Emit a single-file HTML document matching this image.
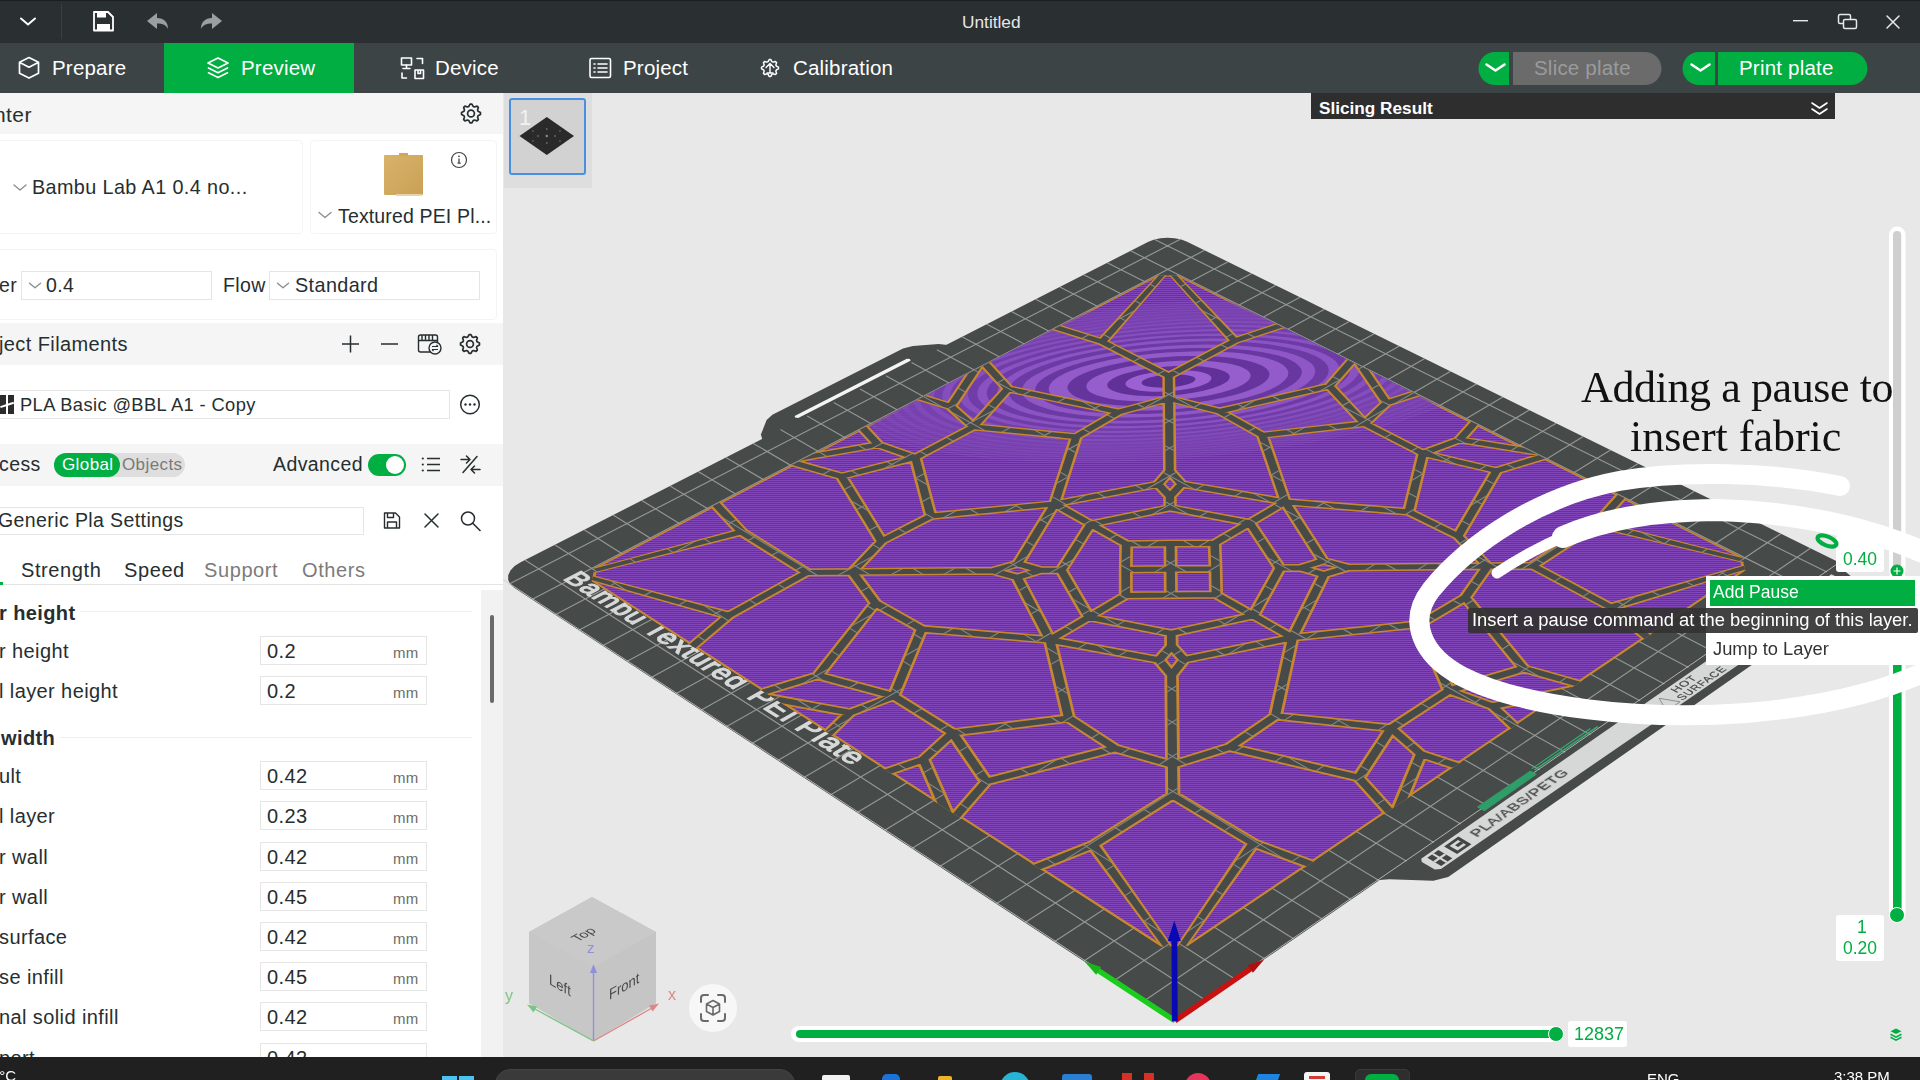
<!DOCTYPE html><html><head><meta charset="utf-8"><title>Untitled</title><style>
*{box-sizing:border-box;margin:0;padding:0}
html,body{width:1920px;height:1080px;overflow:hidden;background:#e8e8e8;font-family:"Liberation Sans",sans-serif;color:#262e30}
.abs{position:absolute}
#title{left:0;top:0;width:1920px;height:43px;background:#2a2f31;border-top:1px solid #1b1e1f}
#tabs{left:0;top:43px;width:1920px;height:50px;background:#3c4446}
.tab{position:absolute;top:0;height:50px;color:#fff;font-size:20.5px;line-height:50px;white-space:nowrap;letter-spacing:0.2px}
#left{left:0;top:93px;width:503px;height:965px;background:#fff;overflow:hidden}
.hdr{position:absolute;left:0;width:503px;background:#f5f5f5}
.t{position:absolute;white-space:nowrap;line-height:1}
#left .t{letter-spacing:0.4px}
.box{position:absolute;border:1px solid #e5e5e5;background:#fff}
.card{position:absolute;border:1px solid #f4f4f4;border-radius:4px;background:#fff}
.mm{position:absolute;font-size:15px;color:#6b6b6b;line-height:1;letter-spacing:0.3px}
#view{left:503px;top:93px;width:1417px;height:965px;background:#e8e8e8;overflow:hidden}
#taskbar{left:0;top:1057px;width:1920px;height:23px;background:#202020;overflow:hidden}
svg{position:absolute;overflow:visible}
</style></head><body><div id="title" class="abs"><svg width="1920" height="43" style="left:0;top:-1px"><path d="M21 18.5 L28 24.5 L35 18.5" fill="none" stroke="#fff" stroke-width="2" stroke-linecap="round" stroke-linejoin="round"/><rect x="61" y="4" width="1" height="35" fill="#3a4042"/><path d="M94 12 h14 l5 5 v13.5 h-19 z" fill="none" stroke="#fff" stroke-width="1.8" stroke-linejoin="round"/><rect x="97" y="12.5" width="9" height="5" fill="#fff"/><rect x="97" y="24" width="13" height="6" fill="#fff"/><path d="M147 21 l10 -8 v5 c7 0 11 4 11 11 c-2 -4 -5 -5.5 -11 -5.5 v5.5 z" fill="#9a9fa0"/><path d="M222 21 l-10 -8 v5 c-7 0 -11 4 -11 11 c2 -4 5 -5.5 11 -5.5 v5.5 z" fill="#9a9fa0"/><rect x="1793" y="20" width="15" height="1.4" fill="#e8e8e8"/><rect x="1838.5" y="14.5" width="12" height="9" rx="1.5" fill="none" stroke="#e8e8e8" stroke-width="1.5"/><rect x="1843.5" y="19.5" width="13" height="9" rx="1.5" fill="#2a2f31" stroke="#e8e8e8" stroke-width="1.5"/><path d="M1887 16 l12 12 M1899 16 l-12 12" stroke="#e8e8e8" stroke-width="1.5" stroke-linecap="round"/></svg><div class="t" style="left:962px;top:13px;font-size:17.300px;color:#e6e6e6">Untitled</div></div><div id="tabs" class="abs"><div class="abs" style="left:164px;top:0;width:190px;height:50px;background:#00ae42"></div><svg width="1920" height="50" style="left:0;top:0"><path d="M29 14.5 l9.5 4.8 v11 l-9.5 4.8 l-9.5 -4.8 v-11 z M19.8 19.5 l9.2 4.7 l9.2 -4.7" fill="none" stroke="#fff" stroke-width="1.7" stroke-linejoin="round"/><path d="M218 15 l10 5 l-10 5 l-10 -5 z M208.5 25 l9.5 4.8 l9.5 -4.8 M208.5 29.8 l9.5 4.8 l9.5 -4.8" fill="none" stroke="#fff" stroke-width="1.7" stroke-linejoin="round" stroke-linecap="round"/><g fill="none" stroke="#fff" stroke-width="1.6" stroke-linejoin="round" stroke-linecap="round"><rect x="401.5" y="15" width="10" height="7"/><path d="M406.5 22 v3 M403 25.5 h7"/><path d="M417 15.5 h5.5 v5"/><path d="M402 30 v5 h4.5"/><rect x="415" y="27" width="8.5" height="8.5"/><path d="M418 27.5 v3 h2.5 v-3"/></g><g fill="none" stroke="#fff" stroke-width="1.6" stroke-linejoin="round" stroke-linecap="round"><rect x="590" y="15.5" width="20.5" height="19" rx="1.5"/><path d="M594 21 h1 M598 21 h9 M594 25 h1 M598 25 h9 M594 29 h1 M598 29 h9"/></g><path d="M769.17 16.54 L770.83 16.54 L771.92 18.66 L773.13 19.15 L775.39 18.43 L776.57 19.61 L775.85 21.87 L776.34 23.08 L778.46 24.17 L778.46 25.83 L776.34 26.92 L775.85 28.13 L776.57 30.39 L775.39 31.57 L773.13 30.85 L771.92 31.34 L770.83 33.46 L769.17 33.46 L768.08 31.34 L766.87 30.85 L764.61 31.57 L763.43 30.39 L764.15 28.13 L763.66 26.92 L761.54 25.83 L761.54 24.17 L763.66 23.08 L764.15 21.87 L763.43 19.61 L764.61 18.43 L766.87 19.15 L768.08 18.66Z" fill="none" stroke="#fff" stroke-width="1.5" stroke-linejoin="round"/><circle style="display:none" cx="770" cy="25" r="3.06" fill="none" stroke="#fff" stroke-width="1.5"/><path d="M770 20.5 v9 M766 24.5 l4 -4 l4 4 M767 30 h6" fill="none" stroke="#fff" stroke-width="1.4" stroke-linecap="round" stroke-linejoin="round"/><path d="M1495 9 h14 v33 h-14 a16.5 16.5 0 0 1 0 -33z" fill="#00ae42"/><path d="M1513 9 h132 a16.5 16.5 0 0 1 0 33 h-132z" fill="#6b6b6b"/><path d="M1486.5 21.5 l9 6 l9 -6" fill="none" stroke="#fff" stroke-width="2.6" stroke-linecap="round" stroke-linejoin="round"/><path d="M1699 9 h16 v33 h-16 a16.5 16.5 0 0 1 0 -33z" fill="#00ae42"/><path d="M1718 9 h133 a16.5 16.5 0 0 1 0 33 h-133z" fill="#00ae42"/><path d="M1691.5 21.5 l9 6 l9 -6" fill="none" stroke="#fff" stroke-width="2.6" stroke-linecap="round" stroke-linejoin="round"/></svg><div class="tab" style="left:52px">Prepare</div><div class="tab" style="left:241px">Preview</div><div class="tab" style="left:435px">Device</div><div class="tab" style="left:623px">Project</div><div class="tab" style="left:793px">Calibration</div><div class="tab" style="left:1534px;color:#9b9b9b">Slice plate</div><div class="tab" style="left:1739px">Print plate</div></div><div id="left" class="abs"><div class="hdr" style="top:0;height:41px"></div><div class="t" style="left:-6px;top:11px;font-size:21px">nter</div><div class="card" style="left:-10px;top:47px;width:313px;height:94px"></div><div class="card" style="left:310px;top:47px;width:187px;height:94px"></div><div class="t" style="left:32px;top:85px;font-size:19.8px">Bambu Lab A1 0.4 no...</div><div class="abs" style="left:384px;top:62px;width:39px;height:40px;background:linear-gradient(135deg,#d9b36a,#c9a055);border-radius:1px"></div><div class="abs" style="left:399px;top:60px;width:9px;height:3px;background:#cfa75e"></div><div class="abs" style="left:396px;top:101px;width:26px;height:2px;background:#e6d3a8"></div><div class="t" style="left:338px;top:113.5px;font-size:19.5px;letter-spacing:0.15px">Textured PEI Pl...</div><div class="card" style="left:-10px;top:156px;width:507px;height:71px"></div><div class="t" style="left:-1px;top:183px;font-size:19.5px">er</div><div class="box" style="left:21px;top:178px;width:191px;height:29px"></div><div class="t" style="left:46px;top:183px;font-size:19.5px">0.4</div><div class="t" style="left:223px;top:183px;font-size:19.5px">Flow</div><div class="box" style="left:269px;top:178px;width:211px;height:29px"></div><div class="t" style="left:295px;top:183px;font-size:19.8px">Standard</div><div class="hdr" style="top:230px;height:42px"></div><div class="t" style="left:-1px;top:241px;font-size:20px">ject Filaments</div><div class="box" style="left:-10px;top:297px;width:460px;height:29px"></div><div class="abs" style="left:0;top:302px;width:14px;height:19px;background:#2b2b2b"></div><div class="abs" style="left:6px;top:302px;width:1.5px;height:19px;background:#fff"></div><div class="abs" style="left:0;top:311px;width:14px;height:1.5px;background:#fff;transform:rotate(-18deg)"></div><div class="t" style="left:20px;top:303px;font-size:18.3px">PLA Basic @BBL A1 - Copy</div><div class="hdr" style="top:351px;height:42px"></div><div class="t" style="left:-1px;top:362px;font-size:19.5px">cess</div><div class="abs" style="left:54px;top:360px;width:131px;height:24px;border-radius:12px;background:#dedede"></div><div class="abs" style="left:54px;top:360px;width:66px;height:24px;border-radius:12px;background:#00ae42"></div><div class="t" style="left:62px;top:363px;font-size:17px;color:#fff">Global</div><div class="t" style="left:122px;top:363px;font-size:17px;color:#7a7a7a">Objects</div><div class="t" style="left:273px;top:362px;font-size:19.5px">Advanced</div><div class="abs" style="left:368px;top:361px;width:38px;height:22px;border-radius:11px;background:#00ae42"></div><div class="abs" style="left:386px;top:363px;width:18px;height:18px;border-radius:9px;background:#fff"></div><div class="box" style="left:-10px;top:414px;width:374px;height:28px"></div><div class="t" style="left:-2px;top:418px;font-size:19.5px">Generic Pla Settings</div><div class="t" style="left:21px;top:466.5px;font-size:20px;color:#262e30;letter-spacing:0.6px">Strength</div><div class="t" style="left:124px;top:466.5px;font-size:20px;color:#262e30;letter-spacing:0.6px">Speed</div><div class="t" style="left:204px;top:466.5px;font-size:20px;color:#7b7b7b;letter-spacing:0.6px">Support</div><div class="t" style="left:302px;top:466.5px;font-size:20px;color:#7b7b7b;letter-spacing:0.6px">Others</div><div class="abs" style="left:0;top:491px;width:503px;height:1px;background:#e4e4e4"></div><div class="abs" style="left:0;top:489px;width:3px;height:3px;background:#00ae42"></div><div class="abs" style="left:481px;top:497px;width:22px;height:470px;background:#f2f2f2"></div><div class="abs" style="left:490px;top:522px;width:4px;height:88px;background:#6a6a6a;border-radius:2px"></div><div class="abs" style="left:80px;top:518px;width:392px;height:1px;background:#eeeeee"></div><div class="t" style="left:-1px;top:510px;font-size:20px;font-weight:bold">r height</div><div class="abs" style="left:60px;top:644px;width:412px;height:1px;background:#eeeeee"></div><div class="t" style="left:1px;top:635px;font-size:20px;font-weight:bold">width</div><div class="t" style="left:-1px;top:548px;font-size:20px">r height</div><div class="box" style="left:260px;top:543px;width:167px;height:29px"></div><div class="t" style="left:267px;top:548px;font-size:20px">0.2</div><div class="mm" style="left:393px;top:552px">mm</div><div class="t" style="left:-1px;top:588px;font-size:20px">l layer height</div><div class="box" style="left:260px;top:583px;width:167px;height:29px"></div><div class="t" style="left:267px;top:588px;font-size:20px">0.2</div><div class="mm" style="left:393px;top:592px">mm</div><div class="t" style="left:-1px;top:673px;font-size:20px">ult</div><div class="box" style="left:260px;top:668px;width:167px;height:29px"></div><div class="t" style="left:267px;top:673px;font-size:20px">0.42</div><div class="mm" style="left:393px;top:677px">mm</div><div class="t" style="left:-1px;top:713px;font-size:20px">l layer</div><div class="box" style="left:260px;top:708px;width:167px;height:29px"></div><div class="t" style="left:267px;top:713px;font-size:20px">0.23</div><div class="mm" style="left:393px;top:717px">mm</div><div class="t" style="left:-1px;top:754px;font-size:20px">r wall</div><div class="box" style="left:260px;top:749px;width:167px;height:29px"></div><div class="t" style="left:267px;top:754px;font-size:20px">0.42</div><div class="mm" style="left:393px;top:758px">mm</div><div class="t" style="left:-1px;top:794px;font-size:20px">r wall</div><div class="box" style="left:260px;top:789px;width:167px;height:29px"></div><div class="t" style="left:267px;top:794px;font-size:20px">0.45</div><div class="mm" style="left:393px;top:798px">mm</div><div class="t" style="left:-1px;top:834px;font-size:20px">surface</div><div class="box" style="left:260px;top:829px;width:167px;height:29px"></div><div class="t" style="left:267px;top:834px;font-size:20px">0.42</div><div class="mm" style="left:393px;top:838px">mm</div><div class="t" style="left:-1px;top:874px;font-size:20px">se infill</div><div class="box" style="left:260px;top:869px;width:167px;height:29px"></div><div class="t" style="left:267px;top:874px;font-size:20px">0.45</div><div class="mm" style="left:393px;top:878px">mm</div><div class="t" style="left:-1px;top:914px;font-size:20px">nal solid infill</div><div class="box" style="left:260px;top:909px;width:167px;height:29px"></div><div class="t" style="left:267px;top:914px;font-size:20px">0.42</div><div class="mm" style="left:393px;top:918px">mm</div><div class="t" style="left:-1px;top:955px;font-size:20px">port</div><div class="box" style="left:260px;top:950px;width:167px;height:29px"></div><div class="t" style="left:267px;top:955px;font-size:20px">0.42</div><div class="mm" style="left:393px;top:959px">mm</div><svg width="503" height="965" style="left:0;top:0"><path d="M470.07 11.05 L471.93 11.05 L473.15 13.41 L474.49 13.96 L477.03 13.16 L478.34 14.47 L477.54 17.01 L478.09 18.35 L480.45 19.57 L480.45 21.43 L478.09 22.65 L477.54 23.99 L478.34 26.53 L477.03 27.84 L474.49 27.04 L473.15 27.59 L471.93 29.95 L470.07 29.95 L468.85 27.59 L467.51 27.04 L464.97 27.84 L463.66 26.53 L464.46 23.99 L463.91 22.65 L461.55 21.43 L461.55 19.57 L463.91 18.35 L464.46 17.01 L463.66 14.47 L464.97 13.16 L467.51 13.96 L468.85 13.41Z" fill="none" stroke="#262e30" stroke-width="1.7" stroke-linejoin="round"/><circle cx="471" cy="20.5" r="3.42" fill="none" stroke="#262e30" stroke-width="1.7"/><circle cx="459" cy="67" r="7.5" fill="none" stroke="#444" stroke-width="1.2"/><path d="M459 65.5 v4.5 M457.5 70.19999999999999 h3.2" stroke="#444" stroke-width="1.3" fill="none"/><circle cx="459" cy="63.30000000000001" r="0.9" fill="#444"/><path d="M14.0 92.0 L20 97.0 L26.0 92.0" fill="none" stroke="#8a8f90" stroke-width="1.4" stroke-linecap="round" stroke-linejoin="round"/><path d="M319.0 119.5 L325 124.5 L331.0 119.5" fill="none" stroke="#8a8f90" stroke-width="1.4" stroke-linecap="round" stroke-linejoin="round"/><path d="M29.5 190.25 L35 194.75 L40.5 190.25" fill="none" stroke="#8a8f90" stroke-width="1.4" stroke-linecap="round" stroke-linejoin="round"/><path d="M277.5 190.25 L283 194.75 L288.5 190.25" fill="none" stroke="#8a8f90" stroke-width="1.4" stroke-linecap="round" stroke-linejoin="round"/><path d="M342 251 h17 M350.5 242.5 v17" stroke="#262e30" stroke-width="1.5"/><path d="M381 251 h17" stroke="#262e30" stroke-width="1.5"/><g fill="none" stroke="#262e30" stroke-width="1.4"><rect x="418.5" y="242" width="19" height="17" rx="2"/><path d="M418.5 247.5 h19 M422 242 v5 M425.5 242 v5 M429 242 v5 M432.500 242 v5"/><circle cx="435" cy="255" r="6" fill="#f5f5f5"/><path d="M432 253.5 h6 m-1.500 -1.5 l1.5 1.5 M438 256.5 h-6 m1.5 1.5 l-1.500 -1.5" stroke-width="1.1"/></g><path d="M469.07 241.55 L470.93 241.55 L472.15 243.91 L473.49 244.46 L476.03 243.66 L477.34 244.97 L476.54 247.51 L477.09 248.85 L479.45 250.07 L479.45 251.93 L477.09 253.15 L476.54 254.49 L477.34 257.03 L476.03 258.34 L473.49 257.54 L472.15 258.09 L470.93 260.45 L469.07 260.45 L467.85 258.09 L466.51 257.54 L463.97 258.34 L462.66 257.03 L463.46 254.49 L462.91 253.15 L460.55 251.93 L460.55 250.07 L462.91 248.85 L463.46 247.51 L462.66 244.97 L463.97 243.66 L466.51 244.46 L467.85 243.91Z" fill="none" stroke="#262e30" stroke-width="1.7" stroke-linejoin="round"/><circle cx="470" cy="251" r="3.42" fill="none" stroke="#262e30" stroke-width="1.7"/><circle cx="470" cy="311.5" r="9.3" fill="none" stroke="#262e30" stroke-width="1.5"/><circle cx="465.500" cy="311.5" r="1.2" fill="#262e30"/><circle cx="470" cy="311.5" r="1.2" fill="#262e30"/><circle cx="474.5" cy="311.5" r="1.2" fill="#262e30"/><path d="M427 365.5 h13 M427 371.5 h13 M427 377.5 h13" stroke="#262e30" stroke-width="1.6"/><circle cx="422.800" cy="365.5" r="1.1" fill="#262e30"/><circle cx="422.800" cy="371.5" r="1.1" fill="#262e30"/><circle cx="422.800" cy="377.5" r="1.1" fill="#262e30"/><g fill="none" stroke="#262e30" stroke-width="1.5" stroke-linecap="round" stroke-linejoin="round"><path d="M463 379.5 L477 363.5"/><path d="M461 366.5 h9 m-3.500 -3.500 l3.500 3.500 l-3.500 3.500"/><path d="M480 376.5 h-9 m3.500 -3.500 l-3.500 3.500 l3.500 3.500"/></g><g fill="none" stroke="#262e30" stroke-width="1.4" stroke-linejoin="round"><path d="M384.5 420.0 h11 l4 4 v11 h-15 z"/><path d="M387.500 420.0 v4.500 h6 v-4.500 M387.500 435.0 v-6 h9 v6"/></g><path d="M425 421.0 l13 13 M438 421.0 l-13 13" stroke="#262e30" stroke-width="1.5" stroke-linecap="round"/><circle cx="468" cy="425.5" r="6.500" fill="none" stroke="#262e30" stroke-width="1.5"/><path d="M473 430.5 l7 7" stroke="#262e30" stroke-width="1.6" stroke-linecap="round"/></svg></div><div id="view" class="abs"><svg width="1920" height="1080" viewBox="0 0 1920 1080" style="left:-503px;top:-93px"><polygon points="1839.5,563.4 1839.7,563.2 1839.7,563.1 1839.7,562.9 1839.7,562.7 1839.5,562.6 1839.3,562.5 1187.1,241.7 1181.3,239.5 1174.6,238.2 1167.5,237.7 1160.3,238.3 1153.6,239.7 1147.9,242.0 520.6,562.3 514.6,566.0 510.4,570.5 508.2,575.2 508.2,579.9 510.3,584.3 514.5,588.1 1174.1,1020.2 1174.3,1020.3 1174.7,1020.4 1175.0,1020.4 1175.3,1020.4 1175.6,1020.3 1175.9,1020.2" fill="#464a48" /><polygon points="763.4,443.3 760.9,434.5 766.6,420.1 772.4,414.7 903.0,348.5 912.9,345.9 938.6,344.0 954.1,345.7" fill="#464a48" /><polygon points="1373.1,880.4 1389.2,879.3 1433.3,880.7 1448.2,877.1 1858.5,590.3 1858.5,582.4 1835.0,562.9" fill="#464a48" /><polygon points="798.2,418.0 910.5,360.7 910.0,359.0 906.8,358.7 794.6,415.9 795.1,417.6" fill="#f4f4f4" /><polygon points="1421.2,858.8 1831.4,574.3 1854.0,585.5 1440.9,869.0 1434.8,869.6 1421.8,861.9" fill="#d6d8d7" /><path d="M1205.3 999.9L525.0 560.0M1144.3 1000.7L1810.4 548.2M1235.3 979.3L554.7 544.8M1113.9 980.8L1780.9 533.7M1264.8 959.0L584.1 529.8M1083.9 961.1L1751.8 519.4M1293.9 938.9L613.1 515.0M1054.3 941.8L1722.9 505.2M1322.6 919.2L641.8 500.4M1025.1 922.6L1694.4 491.2M1351.0 899.6L670.1 485.9M996.3 903.7L1666.1 477.3M1379.0 880.4L698.2 471.6M967.8 885.0L1638.2 463.5M1406.6 861.3L725.9 457.4M939.6 866.6L1610.5 449.9M1433.9 842.6L753.3 443.4M911.8 848.4L1583.2 436.5M1460.8 824.0L780.4 429.6M884.3 830.4L1556.1 423.2M1487.4 805.7L807.2 415.9M857.2 812.6L1529.3 410.0M1513.7 787.7L833.7 402.4M830.3 795.0L1502.8 397.0M1539.6 769.8L860.0 389.0M803.8 777.6L1476.5 384.0M1565.2 752.2L885.9 375.7M777.7 760.5L1450.6 371.3M1590.4 734.8L911.6 362.6M751.8 743.5L1424.8 358.6M1615.4 717.7L936.9 349.7M726.2 726.8L1399.4 346.1M1640.0 700.7L962.0 336.8M700.9 710.2L1374.2 333.7M1664.4 683.9L986.9 324.2M675.9 693.8L1349.2 321.4M1688.5 667.4L1011.5 311.6M651.2 677.6L1324.5 309.3M1712.2 651.0L1035.8 299.2M626.8 661.6L1300.0 297.2M1735.7 634.8L1059.9 286.9M602.6 645.8L1275.8 285.3M1758.9 618.9L1083.7 274.7M578.8 630.2L1251.8 273.5M1781.8 603.1L1107.2 262.7M555.2 614.7L1228.1 261.8M1804.5 587.5L1130.6 250.8M531.8 599.4L1204.6 250.3M1826.9 572.1L1153.7 239.0M508.7 584.3L1181.3 238.8" stroke="#b4b8b7" stroke-width="1.15" fill="none" opacity="0.7"/><path d="M1174.1 1020.2L1839.3 562.5M1175.9 1020.2L495.9 574.8" stroke="#c9cccb" stroke-width="1" fill="none" opacity="0.8"/><g opacity="0.99"><text transform="matrix(2.1549 1.3909 -2.4817 1.3062 562.37 578.88)" font-size="10" letter-spacing="0.405" fill="#d9dbda" stroke="#d9dbda" stroke-width="0.5">Bambu</text><text transform="matrix(2.2487 1.4515 -2.4893 1.3640 641.81 630.16)" font-size="10" letter-spacing="0.405" fill="#d9dbda" stroke="#d9dbda" stroke-width="0.5">Textured</text><text transform="matrix(2.3285 1.5030 -2.4941 1.4131 745.64 697.17)" font-size="10" letter-spacing="0.405" fill="#d9dbda" stroke="#d9dbda" stroke-width="0.5">PEI</text><text transform="matrix(2.3895 1.5423 -2.4969 1.4506 793.40 728.01)" font-size="10" letter-spacing="0.405" fill="#d9dbda" stroke="#d9dbda" stroke-width="0.5">Plate</text><text transform="matrix(1.1910 -0.8268 1.0796 0.6144 1476.71 837.34)" font-size="10" letter-spacing="0.549" fill="#3f4342" stroke="#3f4342" stroke-width="0.25">PLA/ABS/PETG</text><text transform="matrix(0.9332 -0.6465 0.9453 0.5002 1676.31 693.17)" font-size="10" letter-spacing="0.774" fill="#3f4342" stroke="#3f4342" stroke-width="0.2">HOT</text><text transform="matrix(0.8543 -0.5943 0.9482 0.4999 1682.25 700.66)" font-size="10" letter-spacing="0.842" fill="#3f4342" stroke="#3f4342" stroke-width="0.2">SURFACE</text><polygon points="1441.2,866.0 1452.3,858.2 1438.4,850.1 1427.3,857.8" fill="#3f4342" /><polygon points="1445.8,862.8 1447.7,861.4 1433.8,853.3 1431.9,854.6" fill="#d6d8d7" /><polygon points="1435.3,862.5 1446.4,854.8 1444.3,853.5 1433.1,861.2" fill="#d6d8d7" /><polygon points="1457.1,854.1 1471.4,844.2 1458.4,836.6 1444.1,846.5" fill="#3f4342" /><polygon points="1457.6,850.6 1466.0,844.8 1458.0,840.1 1449.6,845.9" fill="#d6d8d7" /><polygon points="1458.1,847.1 1463.5,843.3 1460.4,841.5 1455.0,845.3" fill="#3f4342" /><polygon points="1666.7,711.1 1680.1,701.8 1659.1,698.3" fill="none" stroke="#8a8e8d" stroke-width="1"/><polygon points="1484.4,811.3 1537.1,774.2 1530.3,770.5 1476.7,806.9" fill="#2f9e68" /><polygon points="1535.2,770.6 1598.6,726.9 1597.1,726.1 1533.6,769.7" fill="#3aa874" /><polygon points="1532.4,769.0 1590.9,728.9 1589.7,728.2 1531.2,768.4" fill="#3aa874" /></g><clipPath id="mclip"><polygon points="1188.1,946.1 1745.4,570.7 1742.2,556.9 1178.6,275.3 1157.1,275.4 594.5,567.4 591.6,581.4 1160.5,946.4"/></clipPath><pattern id="hatch" width="8" height="2" patternUnits="userSpaceOnUse"><rect width="8" height="2" fill="#67309f"/><rect y="0" width="8" height="1" fill="#8147b8"/></pattern><g clip-path="url(#mclip)"><polygon points="1188.1,946.1 1745.4,570.7 1742.2,556.9 1178.6,275.3 1157.1,275.4 594.5,567.4 591.6,581.4 1160.5,946.4" fill="#c78630" /><polygon points="1187.2,943.8 1742.3,570.3 1739.4,557.4 1177.9,276.6 1157.8,276.8 597.4,567.9 594.7,580.9 1161.4,944.1" fill="url(#hatch)" /><ellipse cx="1168.5" cy="381.0" rx="328.05" ry="78.1" fill="#9d63d4" opacity="0.18" transform="rotate(-4 1168.5 381.0)"/><ellipse cx="1168.5" cy="381.0" rx="322.65000000000003" ry="76.8" fill="#5c2d94" opacity="0.18" transform="rotate(-4 1168.5 381.0)"/><ellipse cx="1168.5" cy="381.0" rx="317.25" ry="75.5" fill="#9d63d4" opacity="0.18" transform="rotate(-4 1168.5 381.0)"/><ellipse cx="1168.5" cy="381.0" rx="311.85" ry="74.2" fill="#5c2d94" opacity="0.18" transform="rotate(-4 1168.5 381.0)"/><ellipse cx="1168.5" cy="381.0" rx="306.45000000000005" ry="73.0" fill="#9d63d4" opacity="0.18" transform="rotate(-4 1168.5 381.0)"/><ellipse cx="1168.5" cy="381.0" rx="301.05" ry="71.7" fill="#5c2d94" opacity="0.18" transform="rotate(-4 1168.5 381.0)"/><ellipse cx="1168.5" cy="381.0" rx="294.975" ry="70.2" fill="#9d63d4" opacity="0.18" transform="rotate(-4 1168.5 381.0)"/><ellipse cx="1168.5" cy="381.0" rx="288.90000000000003" ry="68.8" fill="#5c2d94" opacity="0.18" transform="rotate(-4 1168.5 381.0)"/><ellipse cx="1168.5" cy="381.0" rx="282.82500000000005" ry="67.3" fill="#9d63d4" opacity="0.18" transform="rotate(-4 1168.5 381.0)"/><ellipse cx="1168.5" cy="381.0" rx="276.75" ry="65.9" fill="#5c2d94" opacity="0.18" transform="rotate(-4 1168.5 381.0)"/><ellipse cx="1168.5" cy="381.0" rx="270.0" ry="64.3" fill="#9d63d4" opacity="0.18" transform="rotate(-4 1168.5 381.0)"/><ellipse cx="1168.5" cy="381.0" rx="263.25" ry="62.7" fill="#5c2d94" opacity="0.20" transform="rotate(-4 1168.5 381.0)"/><ellipse cx="1168.5" cy="381.0" rx="256.5" ry="61.1" fill="#9d63d4" opacity="0.24" transform="rotate(-4 1168.5 381.0)"/><ellipse cx="1168.5" cy="381.0" rx="249.75000000000003" ry="59.5" fill="#5c2d94" opacity="0.28" transform="rotate(-4 1168.5 381.0)"/><ellipse cx="1168.5" cy="381.0" rx="242.32500000000002" ry="57.7" fill="#9d63d4" opacity="0.32" transform="rotate(-4 1168.5 381.0)"/><ellipse cx="1168.5" cy="381.0" rx="234.9" ry="55.9" fill="#5c2d94" opacity="0.36" transform="rotate(-4 1168.5 381.0)"/><ellipse cx="1168.5" cy="381.0" rx="226.8" ry="54.0" fill="#9d63d4" opacity="0.40" transform="rotate(-4 1168.5 381.0)"/><ellipse cx="1168.5" cy="381.0" rx="218.70000000000002" ry="52.1" fill="#5c2d94" opacity="0.44" transform="rotate(-4 1168.5 381.0)"/><ellipse cx="1168.5" cy="381.0" rx="209.925" ry="50.0" fill="#9d63d4" opacity="0.48" transform="rotate(-4 1168.5 381.0)"/><ellipse cx="1168.5" cy="381.0" rx="201.15" ry="47.9" fill="#5c2d94" opacity="0.52" transform="rotate(-4 1168.5 381.0)"/><ellipse cx="1168.5" cy="381.0" rx="191.70000000000002" ry="45.6" fill="#9d63d4" opacity="0.56" transform="rotate(-4 1168.5 381.0)"/><ellipse cx="1168.5" cy="381.0" rx="182.25" ry="43.4" fill="#5c2d94" opacity="0.60" transform="rotate(-4 1168.5 381.0)"/><ellipse cx="1168.5" cy="381.0" rx="171.45000000000002" ry="40.8" fill="#9d63d4" opacity="0.64" transform="rotate(-4 1168.5 381.0)"/><ellipse cx="1168.5" cy="381.0" rx="160.65" ry="38.2" fill="#5c2d94" opacity="0.68" transform="rotate(-4 1168.5 381.0)"/><ellipse cx="1168.5" cy="381.0" rx="147.15" ry="35.0" fill="#9d63d4" opacity="0.72" transform="rotate(-4 1168.5 381.0)"/><ellipse cx="1168.5" cy="381.0" rx="133.65" ry="31.8" fill="#5c2d94" opacity="0.76" transform="rotate(-4 1168.5 381.0)"/><ellipse cx="1168.5" cy="381.0" rx="120.15" ry="28.6" fill="#9d63d4" opacity="0.80" transform="rotate(-4 1168.5 381.0)"/><ellipse cx="1168.5" cy="381.0" rx="101.25" ry="24.1" fill="#5c2d94" opacity="0.84" transform="rotate(-4 1168.5 381.0)"/><ellipse cx="1168.5" cy="381.0" rx="82.35000000000001" ry="19.6" fill="#9d63d4" opacity="0.88" transform="rotate(-4 1168.5 381.0)"/><ellipse cx="1168.5" cy="381.0" rx="61.425000000000004" ry="14.6" fill="#5c2d94" opacity="0.92" transform="rotate(-4 1168.5 381.0)"/><ellipse cx="1168.5" cy="381.0" rx="43.2" ry="10.3" fill="#9d63d4" opacity="0.96" transform="rotate(-4 1168.5 381.0)"/><ellipse cx="1168.5" cy="381.0" rx="27.0" ry="6.4" fill="#5c2d94" opacity="1.00" transform="rotate(-4 1168.5 381.0)"/><path d="M1177.6 569.0 L1177.9 595.0 L1163.9 595.2 L1163.7 569.1ZM1170.9 599.2 L1125.7 599.5 L1125.9 591.3 L1170.9 591.1ZM1130.7 598.2 L1093.6 620.0 L1083.8 614.3 L1120.8 592.6ZM1093.6 620.0 L1054.8 642.8 L1045.0 637.0 L1083.8 614.3ZM1091.1 613.2 L1173.6 629.4 L1168.9 637.3 L1086.3 621.1ZM1178.4 633.3 L1178.5 645.8 L1164.2 645.9 L1164.2 633.4ZM1177.7 647.8 L1165.4 661.9 L1152.7 658.0 L1165.1 644.0ZM1165.5 658.0 L1178.1 673.1 L1165.2 677.0 L1152.6 661.9ZM1156.8 664.0 L1047.5 643.9 L1052.2 635.9 L1161.2 655.9ZM1178.9 675.0 L1180.0 764.8 L1165.1 764.9 L1164.4 675.2ZM1057.0 639.2 L1075.8 717.3 L1061.3 718.8 L1042.8 640.6ZM1074.0 714.9 L1120.6 745.2 L1109.7 751.5 L1063.1 721.1ZM1118.4 744.2 L1175.7 760.7 L1169.3 769.0 L1111.9 752.5ZM1069.8 722.4 L953.6 737.2 L951.4 728.4 L1067.3 713.7ZM947.1 736.0 L888.4 699.3 L899.3 693.0 L958.0 729.5ZM959.4 730.8 L993.1 779.5 L979.2 783.5 L945.7 734.7ZM1117.9 752.5 L988.7 785.8 L983.6 777.2 L1112.4 744.1ZM958.6 735.1 L929.5 761.7 L917.3 756.9 L946.5 730.4ZM926.7 763.3 L881.2 779.1 L874.6 771.1 L920.0 755.4ZM930.6 757.9 L958.1 820.5 L943.4 823.5 L916.2 760.8ZM992.7 783.5 L957.4 824.1 L944.1 819.9 L979.6 779.5ZM1180.0 764.8 L1180.4 795.0 L1165.3 795.1 L1165.1 764.9ZM1178.1 798.4 L1098.6 848.3 L1087.9 841.5 L1167.5 791.8ZM1097.2 849.0 L1030.8 875.2 L1023.0 866.8 L1089.3 840.8ZM1100.2 842.8 L1191.0 972.5 L1182.3 975.3 L1086.2 847.0ZM1170.6 565.1 L1215.5 564.7 L1215.7 572.7 L1170.7 573.1ZM1208.6 568.7 L1207.7 543.4 L1221.5 543.2 L1222.5 568.6ZM1209.7 540.6 L1244.8 520.0 L1254.6 525.4 L1219.6 546.0ZM1244.8 520.0 L1280.3 499.3 L1290.1 504.5 L1254.6 525.4ZM1256.1 521.4 L1286.3 566.7 L1273.4 569.4 L1243.3 524.0ZM1279.7 564.1 L1300.4 563.9 L1300.8 571.9 L1280.1 572.1ZM1297.1 564.4 L1319.5 557.3 L1326.4 564.2 L1304.0 571.4ZM1325.7 557.2 L1350.8 563.8 L1345.3 571.0 L1320.1 564.3ZM1316.4 562.0 L1278.8 503.1 L1291.6 500.7 L1329.4 559.5ZM1347.7 563.5 L1487.1 562.2 L1488.1 570.1 L1348.3 571.4ZM1286.1 498.1 L1409.4 508.1 L1408.1 515.7 L1284.3 505.6ZM1413.1 509.0 L1462.4 533.2 L1453.8 539.0 L1404.4 514.7ZM1464.0 534.3 L1493.6 564.4 L1481.6 567.9 L1452.1 537.8ZM1402.0 511.2 L1416.3 452.7 L1429.5 454.0 L1415.5 512.5ZM1418.5 455.9 L1360.2 426.1 L1369.0 421.0 L1427.3 450.7ZM1425.3 450.0 L1498.8 467.4 L1494.2 474.1 L1420.5 456.7ZM1451.6 534.7 L1490.1 469.4 L1502.9 472.1 L1464.6 537.5ZM1419.0 450.3 L1455.7 436.7 L1463.5 442.7 L1426.8 456.4ZM1453.6 438.0 L1472.8 416.7 L1484.6 420.1 L1465.5 441.4ZM1461.1 436.3 L1552.1 450.8 L1549.2 457.8 L1458.0 443.2ZM1493.0 467.5 L1547.1 451.1 L1554.2 457.5 L1500.0 474.0ZM1487.1 562.2 L1532.0 561.8 L1533.2 569.7 L1488.1 570.1ZM1527.3 563.0 L1591.0 521.6 L1601.7 526.9 L1537.9 568.5ZM1590.2 522.3 L1619.5 489.7 L1631.7 493.5 L1602.5 526.2ZM1598.6 520.8 L1783.0 567.3 L1780.5 571.6 L1594.1 527.8ZM1170.7 573.1 L1125.7 573.5 L1125.7 565.5 L1170.6 565.1ZM1132.7 569.4 L1132.8 595.3 L1118.8 595.5 L1118.8 569.6ZM1082.0 618.6 L1054.7 571.5 L1067.9 568.7 L1095.4 615.7ZM1061.1 574.1 L1040.3 574.3 L1040.6 566.3 L1061.4 566.1ZM1043.6 573.8 L1020.3 581.0 L1014.2 573.9 L1037.4 566.8ZM1014.0 581.1 L989.6 574.3 L996.1 567.1 L1020.5 573.8ZM1023.9 576.1 L1056.7 638.5 L1043.1 641.3 L1010.5 578.8ZM992.6 574.7 L851.9 576.0 L852.8 568.0 L993.1 566.7ZM1048.6 644.1 L920.0 633.1 L922.9 624.8 L1051.2 635.7ZM916.3 632.0 L870.2 606.0 L880.4 599.9 L926.5 625.8ZM868.8 604.8 L845.9 573.8 L858.8 570.2 L881.8 601.1ZM928.4 629.7 L900.9 696.9 L886.7 695.3 L914.5 628.2ZM890.4 700.1 L814.4 679.5 L821.4 671.5 L897.2 692.1ZM881.7 604.5 L824.5 677.0 L811.4 673.9 L868.9 601.5ZM897.4 699.8 L853.4 716.4 L846.3 709.0 L890.3 692.4ZM856.1 714.8 L828.6 741.5 L816.2 737.2 L843.7 710.6ZM847.2 717.0 L750.8 699.2 L756.3 690.8 L852.5 708.5ZM820.8 679.3 L756.3 698.9 L750.8 691.2 L815.1 671.7ZM851.9 576.0 L806.4 576.4 L807.4 568.4 L852.8 568.0ZM811.6 575.2 L733.4 618.4 L724.2 612.7 L802.3 569.7ZM734.5 617.7 L691.8 653.7 L680.3 649.4 L723.1 613.5ZM725.2 619.3 L555.0 570.9 L559.5 566.5 L732.4 611.8ZM1163.7 569.1 L1163.5 543.6 L1177.3 543.5 L1177.6 569.0ZM1170.4 539.6 L1214.6 539.4 L1214.7 547.2 L1170.4 547.4ZM1247.6 526.4 L1167.8 511.4 L1172.3 504.2 L1251.8 519.1ZM1163.3 507.8 L1163.2 496.5 L1176.7 496.4 L1176.8 507.7ZM1164.0 494.8 L1175.6 482.3 L1187.5 485.7 L1175.9 498.2ZM1175.5 485.7 L1163.7 472.6 L1175.7 469.2 L1187.5 482.3ZM1183.6 480.4 L1287.1 498.3 L1283.3 505.5 L1179.5 487.6ZM1163.0 471.0 L1162.5 398.5 L1175.5 398.4 L1176.4 470.8ZM1278.6 502.5 L1255.9 435.8 L1268.9 434.6 L1291.8 501.2ZM1257.7 437.7 L1214.8 413.6 L1224.2 408.7 L1267.1 432.7ZM1216.8 414.4 L1166.2 401.6 L1171.8 395.3 L1222.3 408.0ZM1261.0 431.7 L1363.0 420.1 L1366.1 427.0 L1263.8 438.7ZM1358.7 425.1 L1323.8 387.6 L1335.3 384.6 L1370.4 422.0ZM1217.0 407.9 L1326.9 382.9 L1332.2 389.3 L1222.1 414.4ZM1358.9 421.7 L1381.0 401.1 L1392.3 404.7 L1370.3 425.4ZM1383.1 399.9 L1420.1 388.0 L1427.2 394.0 L1390.1 405.9ZM1380.5 404.0 L1349.1 357.9 L1361.1 355.8 L1392.7 401.8ZM1323.7 384.6 L1349.3 355.4 L1360.9 358.3 L1335.4 387.7ZM1162.5 398.5 L1162.3 376.0 L1175.2 375.9 L1175.5 398.4ZM1164.3 373.5 L1230.2 338.5 L1239.3 343.1 L1173.3 378.4ZM1231.3 338.0 L1284.2 320.5 L1291.1 326.0 L1238.1 343.6ZM1229.0 342.2 L1155.0 259.6 L1161.7 258.0 L1240.4 339.3ZM1170.8 591.1 L1215.8 590.5 L1216.1 598.6 L1171.0 599.2ZM1220.9 591.6 L1258.3 612.6 L1248.5 618.5 L1211.1 597.5ZM1258.3 612.6 L1297.4 634.5 L1287.7 640.6 L1248.5 618.5ZM1255.9 619.4 L1173.7 637.3 L1168.9 629.4 L1250.9 611.7ZM1177.7 643.8 L1190.3 657.7 L1177.7 661.8 L1165.1 647.9ZM1190.5 661.5 L1178.2 676.9 L1165.2 673.3 L1177.5 657.9ZM1181.7 655.7 L1290.1 633.6 L1295.0 641.5 L1186.3 663.8ZM1299.6 638.1 L1282.7 716.5 L1268.2 715.3 L1285.5 636.9ZM1281.0 718.9 L1235.1 750.2 L1224.0 744.1 L1270.0 712.9ZM1232.9 751.2 L1175.8 768.9 L1169.2 760.7 L1226.2 743.1ZM1276.6 711.6 L1392.2 723.8 L1390.2 732.6 L1274.3 720.3ZM1385.7 725.1 L1443.4 687.5 L1454.3 693.6 L1396.7 731.3ZM1398.1 730.0 L1365.7 779.4 L1351.8 775.7 L1384.4 726.4ZM1232.2 742.9 L1361.2 773.2 L1356.2 781.9 L1226.9 751.4ZM1397.2 725.8 L1426.7 751.6 L1414.7 756.6 L1385.2 730.7ZM1423.9 750.1 L1469.3 764.8 L1462.9 772.9 L1417.4 758.1ZM1427.9 755.4 L1402.0 818.5 L1387.3 815.8 L1413.5 752.8ZM1365.2 775.4 L1401.2 814.9 L1388.1 819.4 L1352.2 779.7ZM1178.1 791.7 L1258.5 839.6 L1248.0 846.6 L1167.6 798.5ZM1257.1 838.9 L1323.7 863.5 L1316.1 872.0 L1249.4 847.3ZM1260.3 845.1 L1166.8 975.5 L1158.1 972.9 L1246.3 841.1ZM1222.5 568.6 L1223.0 594.5 L1209.0 594.6 L1208.6 568.7ZM1246.7 614.3 L1273.3 566.8 L1286.5 569.3 L1260.1 616.9ZM1303.6 564.3 L1326.9 571.0 L1320.8 578.2 L1297.5 571.4ZM1320.6 571.0 L1344.7 563.9 L1351.4 571.0 L1327.2 578.2ZM1330.6 575.8 L1299.4 638.8 L1285.7 636.3 L1317.2 573.4ZM1291.2 633.4 L1418.6 620.1 L1421.7 628.2 L1293.9 641.7ZM1415.0 621.2 L1460.3 594.5 L1470.5 600.4 L1425.3 627.1ZM1458.9 595.7 L1481.2 564.5 L1494.1 567.8 L1471.9 599.1ZM1427.0 623.3 L1455.8 689.6 L1441.8 691.4 L1413.3 625.0ZM1445.4 686.6 L1520.2 664.6 L1527.2 672.4 L1452.3 694.5ZM1471.7 595.8 L1530.1 666.8 L1517.2 670.2 L1459.1 599.0ZM1452.3 686.8 L1496.2 702.4 L1489.3 709.9 L1445.3 694.2ZM1498.8 703.9 L1526.6 729.9 L1514.3 734.4 L1486.6 708.4ZM1490.0 702.0 L1584.9 682.5 L1590.6 690.8 L1495.4 710.4ZM1526.4 664.7 L1590.4 682.8 L1585.1 690.6 L1520.9 672.4ZM1537.1 562.9 L1615.2 604.3 L1606.2 610.1 L1528.1 568.6ZM1616.3 605.0 L1659.3 639.9 L1647.9 644.4 L1605.1 609.4ZM1607.1 603.5 L1776.6 555.3 L1781.1 559.6 L1614.3 610.9ZM1118.8 569.5 L1119.3 544.1 L1133.0 544.0 L1132.7 569.4ZM1121.3 546.9 L1085.7 526.9 L1095.5 521.4 L1131.0 541.3ZM1085.7 526.9 L1049.7 506.6 L1059.5 501.2 L1095.5 521.4ZM1097.1 525.3 L1067.8 571.3 L1054.8 568.8 L1084.2 522.9ZM1037.1 573.8 L1014.5 567.1 L1021.3 560.0 L1043.9 566.7ZM1020.8 567.1 L995.7 574.3 L990.0 567.2 L1015.0 560.0ZM1011.4 562.4 L1048.2 502.8 L1061.0 505.0 L1024.5 564.7ZM1055.6 507.7 L931.5 519.9 L929.9 512.3 L1053.7 500.2ZM935.1 518.9 L885.9 544.1 L877.1 538.5 L926.3 513.3ZM887.5 542.9 L858.4 573.7 L846.2 570.3 L875.5 539.6ZM924.0 516.9 L908.7 458.4 L922.0 456.9 L937.5 515.3ZM910.9 455.1 L969.0 424.3 L977.9 429.3 L919.9 460.2ZM917.8 460.9 L843.9 479.7 L839.1 473.0 L912.9 454.3ZM875.0 542.8 L835.1 477.8 L847.9 474.9 L888.0 539.7ZM911.5 460.7 L874.3 447.7 L882.0 441.5 L919.2 454.5ZM872.2 446.4 L852.5 425.3 L864.4 421.7 L884.1 442.7ZM879.8 448.0 L788.0 464.3 L785.0 457.3 L876.5 441.1ZM838.1 479.7 L783.0 464.1 L790.0 457.5 L845.0 473.0ZM801.6 575.3 L736.4 534.7 L747.0 529.2 L812.3 569.6ZM735.5 534.0 L705.4 501.6 L717.6 497.6 L747.9 529.9ZM744.1 535.4 L555.9 583.0 L553.3 578.6 L739.3 528.4ZM1170.5 547.4 L1126.2 548.0 L1126.1 540.2 L1170.3 539.6ZM1088.5 520.5 L1167.8 504.2 L1172.3 511.4 L1092.8 527.8ZM1164.0 498.3 L1152.2 486.0 L1164.1 482.4 L1175.9 494.6ZM1152.1 482.6 L1163.7 469.3 L1175.7 472.5 L1164.2 485.8ZM1160.2 487.8 L1056.6 507.5 L1052.7 500.3 L1156.0 480.7ZM1048.0 503.4 L1069.7 436.2 L1082.7 437.3 L1061.3 504.5ZM1071.5 434.4 L1113.9 409.6 L1123.5 414.4 L1081.0 439.2ZM1115.9 408.9 L1166.1 395.3 L1171.9 401.6 L1121.5 415.2ZM1074.9 440.3 L971.9 430.3 L974.9 423.3 L1077.6 433.2ZM967.6 425.3 L1002.1 387.3 L1013.7 390.1 L979.3 428.2ZM1116.2 415.3 L1005.3 391.9 L1010.5 385.5 L1121.2 408.7ZM967.7 428.7 L945.2 408.4 L956.5 404.5 L979.1 424.8ZM947.4 409.5 L909.9 398.2 L916.9 392.0 L954.3 403.4ZM944.7 405.4 L975.6 358.8 L987.7 360.7 L957.0 407.5ZM1002.0 390.3 L975.8 361.4 L987.5 358.2 L1013.8 387.1ZM1164.3 378.4 L1097.6 344.2 L1106.6 339.4 L1173.3 373.5ZM1098.8 344.7 L1045.3 327.9 L1052.1 322.2 L1105.5 338.9ZM1096.4 340.4 L1173.6 257.9 L1180.3 259.4 L1107.9 343.2ZM1177.5 568.4 L1176.9 570.8 L1173.8 572.6 L1169.6 573.0 L1165.8 571.9 L1163.8 569.8 L1164.4 567.3 L1167.5 565.6 L1171.7 565.1 L1175.5 566.2ZM1177.8 594.4 L1177.2 596.9 L1174.1 598.7 L1169.8 599.1 L1166.0 598.0 L1164.0 595.8 L1164.6 593.3 L1167.7 591.5 L1172.0 591.1 L1175.8 592.2ZM1132.7 594.7 L1132.0 597.2 L1128.9 599.0 L1124.7 599.4 L1120.8 598.3 L1118.8 596.1 L1119.5 593.6 L1122.6 591.8 L1126.9 591.4 L1130.8 592.5ZM1095.7 616.4 L1095.0 619.0 L1091.8 620.8 L1087.5 621.2 L1083.6 620.1 L1081.7 617.8 L1082.4 615.3 L1085.6 613.5 L1089.9 613.0 L1093.8 614.2ZM1057.0 639.2 L1056.2 641.7 L1053.0 643.6 L1048.6 644.1 L1044.7 642.9 L1042.8 640.6 L1043.6 638.0 L1046.8 636.2 L1051.2 635.7 L1055.0 636.9ZM1178.3 632.6 L1177.6 635.2 L1174.5 637.0 L1170.2 637.5 L1166.3 636.3 L1164.2 634.0 L1164.9 631.5 L1168.0 629.6 L1172.3 629.2 L1176.3 630.3ZM1178.4 645.2 L1177.8 647.7 L1174.7 649.6 L1170.3 650.1 L1166.4 648.9 L1164.3 646.6 L1165.0 644.0 L1168.1 642.2 L1172.5 641.7 L1176.4 642.8ZM1166.1 659.2 L1165.4 661.8 L1162.3 663.7 L1157.9 664.2 L1154.0 663.0 L1151.9 660.7 L1152.6 658.1 L1155.7 656.2 L1160.1 655.7 L1164.1 656.9ZM1178.8 674.3 L1178.1 677.0 L1175.0 678.9 L1170.6 679.4 L1166.6 678.2 L1164.5 675.8 L1165.2 673.2 L1168.4 671.3 L1172.8 670.8 L1176.7 672.0ZM1179.9 764.0 L1179.2 766.9 L1176.0 768.9 L1171.4 769.4 L1167.3 768.1 L1165.2 765.6 L1165.9 762.8 L1169.1 760.8 L1173.7 760.3 L1177.8 761.5ZM1075.8 717.3 L1075.0 720.0 L1071.8 722.0 L1067.3 722.4 L1063.3 721.2 L1061.3 718.8 L1062.1 716.1 L1065.3 714.1 L1069.8 713.6 L1073.8 714.8ZM1122.5 747.5 L1121.7 750.3 L1118.5 752.3 L1113.9 752.8 L1109.9 751.6 L1107.8 749.1 L1108.6 746.3 L1111.8 744.3 L1116.4 743.8 L1120.4 745.1ZM959.9 732.0 L959.0 734.7 L955.6 736.7 L951.1 737.2 L947.1 736.0 L945.2 733.5 L946.1 730.8 L949.5 728.8 L954.0 728.3 L958.0 729.5ZM901.1 695.3 L900.2 698.0 L896.8 700.0 L892.3 700.5 L888.4 699.3 L886.6 696.9 L887.5 694.2 L890.9 692.2 L895.4 691.8 L899.3 693.0ZM993.6 780.7 L992.7 783.5 L989.3 785.6 L984.7 786.1 L980.6 784.9 L978.7 782.3 L979.6 779.5 L983.0 777.4 L987.6 776.9 L991.6 778.2ZM930.8 758.5 L929.9 761.3 L926.5 763.4 L921.9 763.8 L917.8 762.6 L916.0 760.1 L916.9 757.3 L920.3 755.3 L924.9 754.8 L928.9 756.0ZM885.4 774.3 L884.4 777.1 L880.9 779.2 L876.3 779.7 L872.3 778.4 L870.4 775.9 L871.4 773.1 L874.9 771.0 L879.5 770.5 L883.5 771.8ZM958.4 821.2 L957.4 824.1 L954.0 826.2 L949.3 826.8 L945.1 825.5 L943.2 822.8 L944.1 819.9 L947.6 817.8 L952.3 817.3 L956.4 818.6ZM1180.3 794.2 L1179.6 797.1 L1176.3 799.2 L1171.7 799.7 L1167.5 798.4 L1165.4 795.9 L1166.1 793.0 L1169.4 790.9 L1174.0 790.4 L1178.1 791.7ZM1100.8 844.0 L1100.0 847.0 L1096.6 849.2 L1091.9 849.7 L1087.7 848.4 L1085.6 845.7 L1086.4 842.8 L1089.8 840.6 L1094.5 840.1 L1098.7 841.4ZM1034.6 870.2 L1033.7 873.2 L1030.2 875.4 L1025.5 875.9 L1021.3 874.6 L1019.2 871.9 L1020.1 868.9 L1023.6 866.7 L1028.3 866.1 L1032.5 867.5ZM1191.4 973.3 L1191.0 975.3 L1188.9 976.7 L1185.9 977.0 L1183.3 976.2 L1181.9 974.4 L1182.4 972.5 L1184.4 971.1 L1187.4 970.7 L1190.0 971.6ZM1222.4 568.0 L1221.8 570.4 L1218.8 572.2 L1214.6 572.6 L1210.7 571.5 L1208.7 569.3 L1209.3 566.9 L1212.3 565.1 L1216.5 564.7 L1220.4 565.8ZM1221.4 542.6 L1220.8 545.0 L1217.8 546.7 L1213.7 547.2 L1209.8 546.1 L1207.8 544.0 L1208.5 541.6 L1211.4 539.8 L1215.6 539.4 L1219.4 540.5ZM1256.4 522.1 L1255.8 524.4 L1252.9 526.1 L1248.8 526.5 L1245.0 525.5 L1243.0 523.4 L1243.6 521.0 L1246.5 519.3 L1250.6 518.9 L1254.4 520.0ZM1291.9 501.2 L1291.3 503.6 L1288.5 505.2 L1284.3 505.6 L1280.6 504.6 L1278.6 502.5 L1279.1 500.2 L1282.0 498.5 L1286.1 498.1 L1289.8 499.2ZM1286.7 567.4 L1286.1 569.8 L1283.2 571.6 L1279.0 572.0 L1275.1 570.9 L1273.0 568.8 L1273.6 566.3 L1276.5 564.5 L1280.7 564.1 L1284.6 565.2ZM1307.4 567.2 L1306.9 569.6 L1303.9 571.4 L1299.7 571.8 L1295.8 570.7 L1293.8 568.6 L1294.3 566.1 L1297.2 564.4 L1301.4 563.9 L1305.3 565.0ZM1329.7 560.1 L1329.2 562.5 L1326.3 564.3 L1322.1 564.7 L1318.2 563.6 L1316.1 561.4 L1316.7 559.0 L1319.6 557.3 L1323.8 556.8 L1327.6 557.9ZM1354.8 566.8 L1354.4 569.2 L1351.5 571.0 L1347.3 571.4 L1343.3 570.3 L1341.2 568.1 L1341.7 565.7 L1344.6 563.9 L1348.8 563.5 L1352.7 564.6ZM1494.4 565.5 L1494.0 567.9 L1491.2 569.7 L1487.0 570.1 L1483.1 569.0 L1480.9 566.8 L1481.2 564.4 L1484.0 562.6 L1488.2 562.2 L1492.1 563.3ZM1415.4 511.2 L1415.0 513.6 L1412.2 515.3 L1408.1 515.7 L1404.2 514.6 L1402.1 512.5 L1402.5 510.2 L1405.3 508.5 L1409.4 508.1 L1413.3 509.1ZM1464.8 535.4 L1464.4 537.8 L1461.6 539.5 L1457.5 539.9 L1453.6 538.9 L1451.4 536.7 L1451.8 534.4 L1454.6 532.6 L1458.7 532.2 L1462.6 533.3ZM1429.4 452.7 L1429.0 454.9 L1426.2 456.5 L1422.2 456.9 L1418.5 455.9 L1416.4 453.9 L1416.8 451.7 L1419.5 450.1 L1423.5 449.7 L1427.3 450.7ZM1371.0 422.9 L1370.6 425.1 L1367.8 426.7 L1363.9 427.1 L1360.2 426.1 L1358.1 424.2 L1358.6 422.0 L1361.3 420.4 L1365.3 420.0 L1369.0 421.0ZM1503.0 470.1 L1502.7 472.4 L1500.0 474.0 L1496.0 474.4 L1492.1 473.4 L1490.0 471.4 L1490.3 469.1 L1493.0 467.5 L1497.0 467.1 L1500.9 468.1ZM1466.0 439.1 L1465.6 441.3 L1463.0 442.9 L1459.0 443.3 L1455.2 442.3 L1453.1 440.3 L1453.5 438.1 L1456.2 436.5 L1460.1 436.1 L1463.9 437.1ZM1485.1 417.8 L1484.7 420.0 L1482.1 421.6 L1478.1 421.9 L1474.4 421.0 L1472.3 419.0 L1472.6 416.9 L1475.3 415.3 L1479.2 414.9 L1483.0 415.9ZM1557.1 453.7 L1556.8 455.9 L1554.2 457.5 L1550.2 457.9 L1546.4 456.9 L1544.2 454.9 L1544.5 452.7 L1547.1 451.1 L1551.1 450.7 L1554.9 451.7ZM1539.3 565.1 L1539.0 567.5 L1536.3 569.3 L1532.1 569.7 L1528.1 568.6 L1525.9 566.4 L1526.2 564.0 L1528.9 562.2 L1533.1 561.8 L1537.1 562.9ZM1603.0 523.6 L1602.7 526.0 L1600.0 527.7 L1596.0 528.1 L1592.0 527.0 L1589.7 524.9 L1590.0 522.6 L1592.7 520.9 L1596.8 520.5 L1600.7 521.5ZM1632.1 491.0 L1631.9 493.3 L1629.2 495.0 L1625.2 495.4 L1621.3 494.3 L1619.0 492.3 L1619.3 490.0 L1621.9 488.3 L1625.9 487.9 L1629.8 488.9ZM1785.7 569.0 L1785.7 570.5 L1784.1 571.6 L1781.6 571.8 L1779.2 571.2 L1777.7 569.9 L1777.8 568.4 L1779.3 567.4 L1781.8 567.1 L1784.3 567.7ZM1132.6 568.8 L1131.9 571.2 L1128.8 573.0 L1124.6 573.4 L1120.8 572.4 L1118.8 570.2 L1119.5 567.7 L1122.6 566.0 L1126.8 565.5 L1130.6 566.6ZM1068.2 569.4 L1067.4 571.8 L1064.3 573.6 L1060.1 574.0 L1056.3 573.0 L1054.4 570.8 L1055.1 568.3 L1058.2 566.6 L1062.5 566.1 L1066.3 567.2ZM1047.4 569.6 L1046.6 572.0 L1043.5 573.8 L1039.2 574.2 L1035.4 573.1 L1033.6 571.0 L1034.4 568.5 L1037.5 566.7 L1041.7 566.3 L1045.5 567.4ZM1024.2 576.8 L1023.4 579.2 L1020.2 581.0 L1016.0 581.4 L1012.2 580.3 L1010.3 578.1 L1011.1 575.7 L1014.3 573.9 L1018.5 573.5 L1022.3 574.6ZM999.7 570.0 L998.9 572.5 L995.8 574.2 L991.5 574.7 L987.7 573.6 L985.9 571.4 L986.7 569.0 L989.9 567.2 L994.1 566.8 L997.9 567.8ZM859.3 571.3 L858.3 573.8 L855.1 575.5 L850.8 576.0 L847.1 574.9 L845.4 572.7 L846.3 570.2 L849.6 568.5 L853.9 568.1 L857.6 569.1ZM928.5 628.2 L927.6 630.8 L924.4 632.6 L920.0 633.1 L916.1 631.9 L914.3 629.7 L915.2 627.1 L918.5 625.3 L922.9 624.8 L926.7 625.9ZM882.3 602.3 L881.4 604.8 L878.2 606.6 L873.8 607.0 L870.0 605.9 L868.3 603.7 L869.2 601.2 L872.5 599.4 L876.8 598.9 L880.6 600.0ZM825.2 674.8 L824.2 677.4 L820.8 679.3 L816.3 679.8 L812.4 678.6 L810.7 676.2 L811.7 673.6 L815.1 671.7 L819.6 671.2 L823.4 672.4ZM857.2 711.9 L856.2 714.7 L852.8 716.6 L848.3 717.1 L844.3 715.9 L842.5 713.5 L843.6 710.8 L847.0 708.8 L851.5 708.3 L855.4 709.5ZM829.8 738.6 L828.8 741.4 L825.3 743.4 L820.7 743.9 L816.8 742.6 L815.0 740.2 L816.0 737.4 L819.5 735.4 L824.1 734.9 L828.0 736.1ZM760.9 694.3 L759.8 697.0 L756.3 698.9 L751.8 699.4 L747.9 698.2 L746.2 695.8 L747.3 693.1 L750.8 691.2 L755.3 690.7 L759.1 691.9ZM813.9 571.7 L812.9 574.2 L809.6 576.0 L805.3 576.4 L801.6 575.3 L800.0 573.1 L800.9 570.7 L804.2 568.9 L808.5 568.5 L812.2 569.6ZM735.9 614.8 L734.8 617.4 L731.5 619.2 L727.1 619.7 L723.3 618.5 L721.7 616.3 L722.8 613.7 L726.2 611.9 L730.5 611.5 L734.3 612.6ZM693.3 650.8 L692.1 653.4 L688.7 655.3 L684.2 655.8 L680.4 654.6 L678.8 652.3 L679.9 649.7 L683.4 647.8 L687.9 647.4 L691.6 648.5ZM561.5 568.3 L560.8 569.7 L558.7 570.8 L556.1 571.1 L554.0 570.4 L553.1 569.1 L553.8 567.6 L555.9 566.6 L558.5 566.3 L560.6 567.0ZM1177.2 542.9 L1176.6 545.3 L1173.6 547.0 L1169.4 547.4 L1165.6 546.3 L1163.6 544.2 L1164.3 541.8 L1167.2 540.1 L1171.4 539.7 L1175.2 540.7ZM1176.8 507.1 L1176.1 509.5 L1173.2 511.2 L1169.0 511.6 L1165.3 510.5 L1163.4 508.4 L1164.0 506.1 L1166.9 504.4 L1171.1 504.0 L1174.8 505.1ZM1176.6 495.8 L1176.0 498.1 L1173.1 499.8 L1168.9 500.2 L1165.2 499.2 L1163.3 497.1 L1163.9 494.8 L1166.9 493.1 L1171.0 492.7 L1174.7 493.8ZM1188.2 483.4 L1187.5 485.7 L1184.6 487.3 L1180.5 487.7 L1176.8 486.7 L1174.9 484.7 L1175.5 482.4 L1178.4 480.7 L1182.5 480.3 L1186.2 481.3ZM1176.3 470.3 L1175.7 472.5 L1172.8 474.2 L1168.7 474.6 L1165.0 473.6 L1163.1 471.5 L1163.7 469.3 L1166.6 467.6 L1170.7 467.2 L1174.4 468.2ZM1175.4 397.9 L1174.8 400.0 L1172.0 401.5 L1168.0 401.9 L1164.4 401.0 L1162.6 399.1 L1163.2 396.9 L1166.0 395.4 L1170.0 395.0 L1173.6 396.0ZM1268.9 434.6 L1268.3 436.8 L1265.5 438.4 L1261.5 438.8 L1257.8 437.8 L1255.9 435.8 L1256.5 433.6 L1259.3 432.0 L1263.3 431.7 L1266.9 432.6ZM1226.0 410.6 L1225.4 412.7 L1222.6 414.3 L1218.6 414.7 L1215.0 413.7 L1213.1 411.8 L1213.7 409.6 L1216.5 408.1 L1220.4 407.7 L1224.1 408.7ZM1335.9 385.5 L1335.4 387.7 L1332.7 389.2 L1328.8 389.6 L1325.1 388.6 L1323.2 386.7 L1323.7 384.6 L1326.4 383.1 L1330.3 382.7 L1333.9 383.7ZM1393.0 402.3 L1392.6 404.5 L1389.9 406.0 L1385.9 406.4 L1382.3 405.4 L1380.3 403.5 L1380.7 401.4 L1383.4 399.8 L1387.3 399.5 L1391.0 400.4ZM1430.0 390.4 L1429.6 392.5 L1426.9 394.1 L1423.0 394.4 L1419.3 393.5 L1417.3 391.6 L1417.7 389.5 L1420.4 387.9 L1424.3 387.6 L1427.9 388.5ZM1361.4 356.3 L1360.9 358.3 L1358.3 359.8 L1354.4 360.2 L1350.8 359.3 L1348.9 357.4 L1349.3 355.4 L1352.0 353.9 L1355.8 353.5 L1359.4 354.4ZM1175.1 375.4 L1174.5 377.5 L1171.7 379.0 L1167.8 379.3 L1164.2 378.4 L1162.4 376.5 L1163.0 374.4 L1165.8 372.9 L1169.8 372.6 L1173.3 373.5ZM1241.0 340.2 L1240.4 342.3 L1237.7 343.7 L1233.8 344.1 L1230.3 343.2 L1228.5 341.4 L1229.0 339.3 L1231.7 337.9 L1235.6 337.5 L1239.1 338.4ZM1293.9 322.7 L1293.4 324.7 L1290.7 326.2 L1286.9 326.5 L1283.4 325.6 L1281.5 323.8 L1282.0 321.8 L1284.7 320.4 L1288.5 320.0 L1292.0 320.9ZM1162.0 258.5 L1161.7 259.6 L1160.1 260.5 L1157.8 260.7 L1155.8 260.2 L1154.7 259.1 L1155.1 258.0 L1156.7 257.2 L1158.9 257.0 L1161.0 257.5ZM1222.9 593.8 L1222.3 596.3 L1219.3 598.1 L1215.0 598.6 L1211.1 597.5 L1209.1 595.2 L1209.7 592.8 L1212.7 590.9 L1217.0 590.5 L1220.9 591.6ZM1260.4 614.9 L1259.8 617.4 L1256.8 619.2 L1252.5 619.7 L1248.5 618.5 L1246.5 616.3 L1247.1 613.7 L1250.1 611.9 L1254.4 611.5 L1258.3 612.6ZM1299.5 636.8 L1299.0 639.4 L1296.0 641.3 L1291.7 641.7 L1287.7 640.6 L1285.5 638.3 L1286.1 635.7 L1289.1 633.8 L1293.4 633.4 L1297.4 634.5ZM1191.1 659.0 L1190.5 661.6 L1187.3 663.5 L1183.0 663.9 L1179.0 662.8 L1176.9 660.5 L1177.6 657.8 L1180.7 656.0 L1185.1 655.5 L1189.1 656.7ZM1282.7 715.1 L1282.1 717.9 L1279.0 719.8 L1274.5 720.3 L1270.4 719.1 L1268.3 716.7 L1268.8 714.0 L1272.0 712.0 L1276.4 711.5 L1280.5 712.7ZM1236.8 746.3 L1236.2 749.1 L1233.0 751.1 L1228.5 751.6 L1224.4 750.4 L1222.2 747.9 L1222.9 745.1 L1226.1 743.1 L1230.6 742.6 L1234.7 743.9ZM1398.4 727.5 L1397.9 730.2 L1394.9 732.2 L1390.4 732.7 L1386.3 731.5 L1384.0 729.0 L1384.5 726.3 L1387.5 724.3 L1392.0 723.8 L1396.1 725.0ZM1455.9 689.8 L1455.5 692.4 L1452.5 694.4 L1448.2 694.8 L1444.0 693.7 L1441.7 691.3 L1442.2 688.6 L1445.1 686.7 L1449.5 686.2 L1453.6 687.4ZM1366.1 776.7 L1365.6 779.6 L1362.4 781.6 L1357.9 782.1 L1353.7 780.9 L1351.4 778.3 L1351.9 775.5 L1355.0 773.4 L1359.6 773.0 L1363.8 774.2ZM1427.9 753.3 L1427.5 756.1 L1424.5 758.1 L1420.0 758.6 L1415.8 757.4 L1413.4 754.9 L1413.9 752.1 L1416.9 750.1 L1421.4 749.6 L1425.6 750.8ZM1473.4 768.1 L1473.0 770.9 L1470.0 773.0 L1465.5 773.4 L1461.2 772.2 L1458.9 769.7 L1459.3 766.9 L1462.3 764.8 L1466.8 764.3 L1471.0 765.6ZM1402.1 816.3 L1401.6 819.3 L1398.5 821.4 L1393.9 821.9 L1389.6 820.6 L1387.3 818.0 L1387.7 815.1 L1390.9 813.0 L1395.5 812.5 L1399.7 813.7ZM1260.8 842.3 L1260.2 845.2 L1256.9 847.4 L1252.2 847.9 L1248.0 846.6 L1245.7 844.0 L1246.4 841.0 L1249.6 838.8 L1254.3 838.3 L1258.6 839.6ZM1327.5 866.9 L1326.9 869.9 L1323.7 872.1 L1319.0 872.6 L1314.6 871.3 L1312.3 868.6 L1312.9 865.6 L1316.1 863.4 L1320.8 862.8 L1325.1 864.2ZM1167.2 973.6 L1166.7 975.6 L1164.6 977.0 L1161.7 977.3 L1159.0 976.5 L1157.7 974.7 L1158.1 972.8 L1160.2 971.4 L1163.2 971.0 L1165.8 971.9ZM1330.7 573.9 L1330.2 576.4 L1327.3 578.2 L1323.0 578.6 L1319.1 577.5 L1317.0 575.3 L1317.6 572.8 L1320.5 571.1 L1324.7 570.7 L1328.6 571.7ZM1427.1 623.4 L1426.6 626.0 L1423.7 627.8 L1419.4 628.3 L1415.4 627.1 L1413.2 624.9 L1413.6 622.3 L1416.6 620.5 L1420.8 620.0 L1424.8 621.2ZM1472.2 596.7 L1471.9 599.2 L1469.0 601.0 L1464.8 601.5 L1460.8 600.3 L1458.6 598.1 L1459.0 595.6 L1461.8 593.8 L1466.0 593.4 L1470.0 594.5ZM1530.7 667.8 L1530.3 670.4 L1527.5 672.3 L1523.1 672.8 L1519.0 671.6 L1516.7 669.2 L1517.0 666.6 L1519.9 664.7 L1524.2 664.3 L1528.3 665.4ZM1499.8 705.4 L1499.5 708.1 L1496.5 710.1 L1492.1 710.5 L1488.0 709.3 L1485.6 706.9 L1486.0 704.2 L1488.9 702.3 L1493.3 701.8 L1497.5 703.0ZM1527.6 731.4 L1527.3 734.1 L1524.3 736.1 L1519.9 736.6 L1515.7 735.4 L1513.3 732.9 L1513.6 730.2 L1516.6 728.2 L1521.0 727.7 L1525.2 728.9ZM1594.8 685.9 L1594.5 688.6 L1591.7 690.5 L1587.3 691.0 L1583.1 689.8 L1580.7 687.4 L1581.0 684.8 L1583.9 682.8 L1588.2 682.4 L1592.4 683.5ZM1617.5 606.5 L1617.3 609.0 L1614.5 610.8 L1610.3 611.2 L1606.2 610.1 L1603.9 607.9 L1604.1 605.4 L1606.9 603.6 L1611.1 603.1 L1615.1 604.2ZM1660.5 641.4 L1660.3 644.0 L1657.5 645.9 L1653.3 646.3 L1649.1 645.2 L1646.7 642.9 L1646.9 640.3 L1649.7 638.4 L1653.9 638.0 L1658.1 639.1ZM1782.8 557.1 L1782.8 558.5 L1781.2 559.6 L1778.8 559.8 L1776.3 559.2 L1774.9 557.9 L1774.9 556.4 L1776.5 555.4 L1778.9 555.1 L1781.4 555.8ZM1133.0 543.4 L1132.3 545.8 L1129.3 547.5 L1125.0 548.0 L1121.3 546.9 L1119.3 544.8 L1120.0 542.4 L1123.1 540.6 L1127.3 540.2 L1131.0 541.3ZM1097.4 523.5 L1096.7 525.8 L1093.7 527.5 L1089.5 528.0 L1085.7 526.9 L1083.9 524.8 L1084.6 522.4 L1087.6 520.7 L1091.8 520.3 L1095.5 521.4ZM1061.4 503.3 L1060.6 505.6 L1057.6 507.3 L1053.4 507.7 L1049.7 506.6 L1047.9 504.6 L1048.7 502.2 L1051.7 500.6 L1055.8 500.2 L1059.5 501.2ZM1024.8 562.9 L1024.0 565.3 L1020.9 567.1 L1016.6 567.5 L1012.9 566.4 L1011.0 564.2 L1011.8 561.8 L1014.9 560.0 L1019.2 559.6 L1023.0 560.7ZM937.5 515.4 L936.7 517.8 L933.5 519.5 L929.3 519.9 L925.7 518.9 L923.9 516.8 L924.8 514.4 L927.9 512.7 L932.1 512.3 L935.8 513.4ZM888.4 540.6 L887.5 543.0 L884.3 544.7 L880.0 545.1 L876.3 544.1 L874.6 541.9 L875.5 539.5 L878.7 537.8 L883.0 537.4 L886.7 538.5ZM922.0 457.0 L921.2 459.2 L918.1 460.9 L914.0 461.2 L910.4 460.2 L908.7 458.2 L909.6 456.0 L912.6 454.4 L916.7 454.0 L920.3 455.0ZM980.0 426.2 L979.2 428.3 L976.2 429.9 L972.2 430.3 L968.6 429.3 L966.9 427.4 L967.7 425.2 L970.7 423.6 L974.7 423.2 L978.3 424.2ZM848.2 475.7 L847.3 478.0 L844.2 479.7 L840.0 480.1 L836.4 479.0 L834.8 477.0 L835.7 474.7 L838.9 473.1 L843.0 472.7 L846.6 473.7ZM884.8 443.9 L883.9 446.2 L880.8 447.8 L876.7 448.2 L873.2 447.2 L871.5 445.2 L872.4 443.0 L875.5 441.4 L879.6 441.0 L883.1 442.0ZM865.0 422.9 L864.2 425.1 L861.1 426.7 L857.0 427.1 L853.5 426.1 L851.9 424.1 L852.8 422.0 L855.8 420.4 L859.9 420.0 L863.4 421.0ZM793.2 460.2 L792.2 462.4 L789.1 464.0 L784.9 464.4 L781.4 463.4 L779.8 461.4 L780.8 459.2 L783.9 457.5 L788.1 457.1 L791.6 458.1ZM748.6 531.3 L747.5 533.6 L744.3 535.4 L740.0 535.8 L736.4 534.7 L734.8 532.6 L735.8 530.2 L739.1 528.5 L743.4 528.1 L747.0 529.1ZM718.3 499.0 L717.3 501.3 L714.0 503.0 L709.8 503.4 L706.2 502.3 L704.7 500.3 L705.7 497.9 L709.0 496.3 L713.2 495.9 L716.8 496.9ZM558.9 580.4 L558.1 581.9 L556.0 583.0 L553.4 583.2 L551.2 582.6 L550.4 581.2 L551.1 579.8 L553.2 578.7 L555.8 578.4 L558.0 579.1ZM1164.8 483.6 L1164.1 485.9 L1161.2 487.5 L1157.1 487.9 L1153.4 486.9 L1151.5 484.9 L1152.1 482.6 L1155.1 480.9 L1159.2 480.5 L1162.9 481.5ZM1082.8 436.1 L1082.1 438.4 L1079.1 440.0 L1075.1 440.3 L1071.5 439.4 L1069.7 437.4 L1070.4 435.2 L1073.3 433.6 L1077.3 433.2 L1081.0 434.2ZM1125.2 411.4 L1124.5 413.6 L1121.6 415.1 L1117.6 415.5 L1114.0 414.5 L1112.2 412.6 L1112.9 410.5 L1115.8 408.9 L1119.8 408.5 L1123.3 409.5ZM1014.3 388.1 L1013.6 390.2 L1010.7 391.8 L1006.7 392.1 L1003.2 391.2 L1001.5 389.3 L1002.2 387.2 L1005.1 385.6 L1009.1 385.3 L1012.6 386.2ZM957.4 405.8 L956.6 408.0 L953.6 409.6 L949.6 409.9 L946.0 409.0 L944.4 407.1 L945.2 404.9 L948.1 403.3 L952.2 403.0 L955.7 403.9ZM919.9 394.5 L919.0 396.6 L916.0 398.2 L912.0 398.6 L908.5 397.6 L906.9 395.7 L907.7 393.6 L910.7 392.0 L914.7 391.7 L918.2 392.6ZM988.0 359.2 L987.3 361.3 L984.4 362.8 L980.4 363.1 L976.9 362.2 L975.3 360.3 L976.0 358.3 L978.9 356.8 L982.9 356.4 L986.3 357.3ZM1108.4 341.2 L1107.8 343.3 L1105.0 344.8 L1101.1 345.1 L1097.6 344.2 L1095.8 342.4 L1096.5 340.3 L1099.3 338.9 L1103.2 338.5 L1106.7 339.4ZM1055.0 324.5 L1054.3 326.5 L1051.5 328.0 L1047.6 328.3 L1044.1 327.4 L1042.4 325.6 L1043.1 323.6 L1046.0 322.2 L1049.8 321.8 L1053.3 322.7ZM1180.6 258.4 L1180.2 259.5 L1178.6 260.3 L1176.4 260.5 L1174.4 260.0 L1173.3 259.0 L1173.6 257.9 L1175.2 257.0 L1177.5 256.8 L1179.5 257.3Z" fill="#c78630" fill-rule="nonzero"/><path id="struts" d="M1174.9 569.0 L1175.2 595.1 L1166.6 595.2 L1166.4 569.1ZM1170.9 597.6 L1125.7 597.9 L1125.8 592.9 L1170.9 592.6ZM1128.8 597.1 L1091.7 618.9 L1085.7 615.4 L1122.7 593.6ZM1091.7 618.9 L1052.9 641.7 L1046.9 638.1 L1085.7 615.4ZM1090.2 614.7 L1172.7 630.9 L1169.8 635.8 L1087.2 619.5ZM1175.6 633.3 L1175.8 645.8 L1167.0 645.9 L1166.9 633.4ZM1175.3 647.1 L1162.9 661.2 L1155.1 658.8 L1167.5 644.7ZM1163.0 658.8 L1175.6 673.9 L1167.7 676.3 L1155.1 661.2ZM1157.7 662.5 L1048.4 642.4 L1051.3 637.4 L1160.4 657.5ZM1176.1 675.0 L1177.1 764.8 L1167.9 764.9 L1167.2 675.1ZM1054.2 639.4 L1073.0 717.6 L1064.1 718.5 L1045.5 640.3ZM1071.9 716.1 L1118.5 746.4 L1111.8 750.3 L1065.2 719.9ZM1117.2 745.8 L1174.5 762.3 L1170.6 767.4 L1113.1 750.9ZM1069.3 720.7 L953.2 735.5 L951.9 730.0 L1067.8 715.4ZM949.2 734.7 L890.5 698.0 L897.2 694.2 L955.9 730.8ZM956.8 731.6 L990.4 780.3 L981.9 782.7 L948.3 733.9ZM1116.8 750.9 L987.7 784.1 L984.6 778.9 L1113.5 745.8ZM956.3 734.2 L927.1 760.8 L919.6 757.8 L948.8 731.3ZM925.4 761.7 L879.9 777.6 L875.9 772.6 L921.3 756.9ZM927.8 758.4 L955.3 821.1 L946.2 822.9 L918.9 760.2ZM990.2 782.8 L954.9 823.3 L946.7 820.7 L982.1 780.2ZM1177.1 764.8 L1177.5 795.0 L1168.2 795.1 L1167.9 764.9ZM1176.1 797.1 L1096.5 847.0 L1090.0 842.8 L1169.6 793.0ZM1095.6 847.4 L1029.3 873.6 L1024.5 868.4 L1090.8 842.4ZM1097.5 843.6 L1189.3 973.0 L1184.0 974.7 L1088.9 846.2ZM1170.6 566.6 L1215.5 566.2 L1215.6 571.1 L1170.7 571.5ZM1211.3 568.7 L1210.4 543.3 L1218.9 543.2 L1219.8 568.6ZM1211.6 541.6 L1246.7 521.1 L1252.7 524.4 L1217.7 545.0ZM1246.7 521.1 L1282.2 500.3 L1288.2 503.5 L1252.7 524.4ZM1253.6 521.9 L1283.8 567.2 L1275.9 568.9 L1245.8 523.5ZM1279.7 565.6 L1300.4 565.4 L1300.7 570.3 L1280.0 570.5ZM1298.5 565.7 L1320.8 558.6 L1325.1 562.9 L1302.7 570.0ZM1324.7 558.6 L1349.7 565.2 L1346.3 569.7 L1321.2 563.0ZM1318.9 561.5 L1281.3 502.6 L1289.1 501.1 L1326.9 560.0ZM1347.9 565.0 L1487.3 563.7 L1487.9 568.6 L1348.2 569.9ZM1285.7 499.6 L1409.2 509.6 L1408.3 514.2 L1284.7 504.2ZM1411.4 510.1 L1460.7 534.3 L1455.4 537.8 L1406.1 513.6ZM1461.7 535.0 L1491.3 565.0 L1483.9 567.3 L1454.4 537.1ZM1404.6 511.5 L1418.8 452.9 L1426.9 453.7 L1412.9 512.3ZM1420.2 454.9 L1361.9 425.1 L1367.3 422.0 L1425.6 451.7ZM1424.3 451.3 L1497.9 468.7 L1495.1 472.8 L1421.4 455.4ZM1454.1 535.2 L1492.6 469.9 L1500.4 471.6 L1462.1 536.9ZM1420.5 451.4 L1457.2 437.9 L1462.0 441.6 L1425.3 455.2ZM1455.9 438.6 L1475.0 417.4 L1482.3 419.5 L1463.2 440.8ZM1460.5 437.6 L1551.5 452.2 L1549.8 456.5 L1458.6 441.8ZM1494.4 468.7 L1548.5 452.3 L1552.8 456.3 L1498.6 472.8ZM1487.3 563.7 L1532.2 563.3 L1532.9 568.2 L1487.9 568.6ZM1529.3 564.1 L1593.1 522.7 L1599.6 525.9 L1535.9 567.4ZM1592.6 523.1 L1621.8 490.5 L1629.3 492.8 L1600.1 525.5ZM1597.8 522.1 L1782.5 568.1 L1781.0 570.8 L1595.0 526.4ZM1170.7 571.5 L1125.7 571.9 L1125.7 567.0 L1170.6 566.6ZM1130.0 569.4 L1130.1 595.3 L1121.5 595.4 L1121.4 569.5ZM1084.6 618.0 L1057.2 570.9 L1065.3 569.2 L1092.8 616.3ZM1061.2 572.5 L1040.4 572.7 L1040.6 567.8 L1061.3 567.6ZM1042.4 572.4 L1019.2 579.6 L1015.3 575.3 L1038.6 568.1ZM1015.3 579.7 L990.8 572.9 L994.8 568.5 L1019.2 575.2ZM1021.4 576.6 L1054.1 639.0 L1045.7 640.7 L1013.1 578.3ZM992.7 573.2 L852.1 574.5 L852.6 569.5 L993.0 568.3ZM1049.1 642.5 L920.5 631.5 L922.3 626.4 L1050.7 637.3ZM918.3 630.8 L872.2 604.9 L878.5 601.1 L924.6 627.0ZM871.3 604.1 L848.3 573.1 L856.3 570.9 L879.3 601.8ZM925.7 629.4 L898.2 696.6 L889.5 695.6 L917.2 628.5ZM891.7 698.6 L815.8 677.9 L820.1 673.1 L895.9 693.6ZM879.2 603.9 L821.9 676.5 L813.9 674.5 L871.4 602.1ZM896.0 698.4 L852.1 715.0 L847.7 710.4 L891.6 693.9ZM853.7 714.0 L826.2 740.7 L818.6 738.0 L846.1 711.4ZM848.2 715.3 L751.8 697.6 L755.3 692.5 L851.5 710.1ZM819.7 677.8 L755.3 697.4 L751.8 692.7 L816.2 673.2ZM852.1 574.5 L806.6 574.9 L807.2 570.0 L852.6 569.5ZM809.8 574.1 L731.6 617.3 L726.0 613.8 L804.1 570.7ZM732.3 616.8 L689.6 652.9 L682.5 650.2 L725.3 614.3ZM726.6 617.9 L555.9 570.0 L558.7 567.3 L731.0 613.2ZM1166.4 569.1 L1166.2 543.6 L1174.6 543.5 L1174.9 569.0ZM1170.4 541.1 L1214.6 540.9 L1214.7 545.7 L1170.4 545.9ZM1248.4 525.0 L1168.7 510.0 L1171.4 505.6 L1251.0 520.5ZM1165.9 507.8 L1165.8 496.5 L1174.1 496.4 L1174.2 507.7ZM1166.3 495.4 L1177.9 483.0 L1185.2 485.1 L1173.6 497.5ZM1177.8 485.1 L1166.0 471.9 L1173.4 469.9 L1185.2 483.0ZM1182.8 481.8 L1286.4 499.7 L1284.0 504.1 L1180.3 486.2ZM1165.6 470.9 L1165.0 398.5 L1173.0 398.4 L1173.8 470.9ZM1281.1 502.3 L1258.4 435.6 L1266.4 434.8 L1289.3 501.5ZM1259.5 436.8 L1216.6 412.7 L1222.4 409.7 L1265.3 433.7ZM1217.8 413.2 L1167.3 400.4 L1170.7 396.5 L1221.2 409.2ZM1261.5 433.1 L1363.6 421.4 L1365.5 425.7 L1263.3 437.4ZM1361.0 424.5 L1326.0 387.0 L1333.1 385.2 L1368.2 422.6ZM1218.0 409.2 L1327.9 384.2 L1331.2 388.1 L1221.1 413.2ZM1361.1 422.4 L1383.1 401.8 L1390.1 404.0 L1368.1 424.7ZM1384.5 401.1 L1421.5 389.2 L1425.8 392.9 L1388.8 404.8ZM1382.9 403.6 L1351.4 357.5 L1358.8 356.2 L1390.4 402.2ZM1325.9 385.2 L1351.5 355.9 L1358.7 357.8 L1333.1 387.1ZM1165.0 398.5 L1164.8 376.0 L1172.7 375.9 L1173.0 398.4ZM1166.0 374.5 L1231.9 339.4 L1237.5 342.2 L1171.6 377.4ZM1232.6 339.1 L1285.6 321.5 L1289.8 325.0 L1236.8 342.5ZM1231.2 341.7 L1156.3 259.3 L1160.4 258.3 L1238.2 339.9ZM1170.8 592.6 L1215.9 592.0 L1216.1 597.0 L1170.9 597.6ZM1219.0 592.7 L1256.4 613.7 L1250.4 617.4 L1213.0 596.3ZM1256.4 613.7 L1295.5 635.7 L1289.5 639.4 L1250.4 617.4ZM1255.0 617.9 L1172.7 635.7 L1169.8 630.9 L1251.9 613.2ZM1175.3 644.6 L1187.9 658.5 L1180.1 661.0 L1167.5 647.1ZM1188.0 660.8 L1175.7 676.2 L1167.7 674.0 L1180.0 658.6ZM1182.6 657.2 L1291.1 635.1 L1294.0 640.0 L1185.4 662.2ZM1296.9 637.9 L1279.9 716.3 L1271.0 715.5 L1288.2 637.2ZM1278.8 717.7 L1232.9 749.0 L1226.2 745.3 L1272.1 714.1ZM1231.6 749.6 L1174.6 767.4 L1170.5 762.3 L1227.5 744.6ZM1276.2 713.2 L1391.8 725.5 L1390.6 730.9 L1274.7 718.6ZM1387.8 726.3 L1445.5 688.7 L1452.2 692.4 L1394.6 730.1ZM1395.4 729.3 L1363.0 778.7 L1354.5 776.4 L1387.0 727.1ZM1231.2 744.5 L1360.3 774.9 L1357.2 780.2 L1227.9 749.7ZM1394.9 726.7 L1424.4 752.5 L1417.0 755.6 L1387.5 729.7ZM1422.7 751.6 L1468.1 766.4 L1464.2 771.4 L1418.7 756.6ZM1425.1 754.9 L1399.2 818.0 L1390.2 816.3 L1416.3 753.3ZM1362.7 776.2 L1398.7 815.8 L1390.6 818.6 L1354.7 778.9ZM1176.1 793.0 L1256.5 840.9 L1250.0 845.3 L1169.6 797.2ZM1255.6 840.5 L1322.2 865.1 L1317.6 870.3 L1250.9 845.7ZM1257.6 844.3 L1165.1 975.0 L1159.8 973.4 L1249.0 841.9ZM1219.8 568.6 L1220.3 594.5 L1211.7 594.6 L1211.3 568.7ZM1249.3 614.8 L1275.8 567.3 L1283.9 568.8 L1257.6 616.4ZM1302.4 565.7 L1325.7 572.4 L1322.0 576.8 L1298.7 570.1ZM1321.8 572.4 L1346.0 565.3 L1350.1 569.6 L1325.9 576.8ZM1328.0 575.3 L1296.8 638.3 L1288.3 636.8 L1319.8 573.9ZM1291.7 635.0 L1419.2 621.6 L1421.1 626.7 L1293.4 640.1ZM1417.0 622.3 L1462.3 595.6 L1468.6 599.2 L1423.3 626.0ZM1461.4 596.4 L1483.6 565.1 L1491.6 567.2 L1469.4 598.5ZM1424.4 623.6 L1453.1 690.0 L1444.5 691.1 L1415.9 624.7ZM1446.7 688.1 L1521.5 666.1 L1525.8 670.9 L1450.9 692.9ZM1469.3 596.4 L1527.6 667.5 L1519.7 669.5 L1461.5 598.4ZM1451.0 688.2 L1494.8 703.9 L1490.6 708.5 L1446.7 692.8ZM1496.5 704.8 L1524.2 730.8 L1516.7 733.6 L1489.0 707.5ZM1491.1 703.6 L1586.0 684.1 L1589.5 689.2 L1494.4 708.7ZM1525.4 666.1 L1589.4 684.3 L1586.1 689.1 L1522.0 670.9ZM1535.4 564.0 L1613.5 605.4 L1607.9 609.0 L1529.8 567.5ZM1614.1 605.8 L1657.1 640.8 L1650.1 643.5 L1607.2 608.5ZM1608.5 604.9 L1777.5 556.2 L1780.2 558.8 L1612.9 609.4ZM1121.4 569.5 L1121.9 544.1 L1130.4 544.1 L1130.0 569.5ZM1123.1 545.8 L1087.6 525.8 L1093.6 522.4 L1129.2 542.4ZM1087.6 525.8 L1051.6 505.6 L1057.6 502.2 L1093.6 522.4ZM1094.6 524.9 L1065.3 570.9 L1057.3 569.3 L1086.7 523.4ZM1038.4 572.5 L1015.8 565.7 L1020.0 561.4 L1042.6 568.1ZM1019.7 565.7 L994.6 572.9 L991.1 568.5 L1016.1 561.4ZM1013.9 562.8 L1050.7 503.2 L1058.6 504.6 L1021.9 564.3ZM1055.2 506.2 L931.2 518.4 L930.2 513.8 L1054.1 501.6ZM933.4 517.8 L884.2 543.0 L878.8 539.5 L928.0 514.4ZM885.2 542.3 L856.1 573.0 L848.6 571.0 L877.8 540.2ZM926.6 516.6 L911.3 458.1 L919.4 457.2 L934.9 515.6ZM912.6 456.0 L970.7 425.2 L976.2 428.3 L918.1 459.2ZM916.9 459.6 L843.0 478.4 L840.0 474.3 L913.8 455.6ZM877.5 542.2 L837.6 477.3 L845.4 475.5 L885.5 540.3ZM913.0 459.5 L875.8 446.5 L880.5 442.7 L917.7 455.7ZM874.5 445.7 L854.8 424.6 L862.1 422.4 L881.8 443.4ZM879.2 446.7 L787.4 462.9 L785.6 458.6 L877.2 442.5ZM839.4 478.4 L784.4 462.8 L788.7 458.8 L843.6 474.3ZM803.6 574.2 L738.4 533.6 L745.0 530.2 L810.2 570.7ZM737.9 533.2 L707.7 500.8 L715.3 498.4 L745.5 530.6ZM743.1 534.1 L555.4 582.2 L553.8 579.5 L740.2 529.8ZM1170.4 545.9 L1126.2 546.5 L1126.1 541.7 L1170.4 541.1ZM1089.3 521.9 L1168.7 505.6 L1171.5 510.0 L1092.0 526.4ZM1166.3 497.6 L1154.5 485.3 L1161.8 483.1 L1173.6 495.3ZM1154.4 483.2 L1166.0 469.9 L1173.4 471.9 L1161.9 485.2ZM1159.4 486.4 L1055.9 506.1 L1053.4 501.7 L1156.8 482.0ZM1050.5 503.6 L1072.2 436.4 L1080.2 437.1 L1058.7 504.2ZM1073.3 435.3 L1115.8 410.6 L1121.6 413.5 L1079.1 438.3ZM1117.0 410.1 L1167.2 396.5 L1170.8 400.4 L1120.4 414.0ZM1075.4 438.9 L972.5 428.9 L974.4 424.6 L1077.0 434.6ZM969.8 425.9 L1004.3 387.8 L1011.5 389.6 L977.1 427.7ZM1117.2 414.0 L1006.3 390.7 L1009.5 386.7 L1120.2 410.0ZM969.9 428.0 L947.4 407.6 L954.3 405.3 L976.9 425.6ZM948.7 408.4 L911.2 397.0 L915.5 393.2 L953.0 404.6ZM947.1 405.8 L977.9 359.2 L985.4 360.4 L954.6 407.1ZM1004.3 389.7 L978.1 360.7 L985.2 358.8 L1011.5 387.7ZM1166.0 377.5 L1099.4 343.3 L1104.9 340.3 L1171.5 374.4ZM1100.1 343.6 L1046.6 326.8 L1050.8 323.3 L1104.2 340.0ZM1098.6 341.0 L1174.9 258.2 L1179.0 259.1 L1105.7 342.7ZM1174.9 568.6 L1174.5 570.2 L1172.6 571.2 L1170.0 571.5 L1167.6 570.8 L1166.4 569.5 L1166.8 568.0 L1168.7 566.9 L1171.3 566.6 L1173.7 567.3ZM1175.2 594.7 L1174.8 596.2 L1172.9 597.3 L1170.2 597.6 L1167.9 596.9 L1166.6 595.5 L1167.0 594.0 L1168.9 592.9 L1171.5 592.6 L1173.9 593.3ZM1130.1 595.0 L1129.6 596.5 L1127.7 597.6 L1125.1 597.9 L1122.7 597.2 L1121.5 595.8 L1121.9 594.3 L1123.8 593.2 L1126.5 592.9 L1128.8 593.6ZM1093.0 616.7 L1092.6 618.3 L1090.6 619.4 L1088.0 619.7 L1085.6 619.0 L1084.4 617.6 L1084.8 616.0 L1086.8 614.9 L1089.4 614.6 L1091.8 615.3ZM1054.2 639.4 L1053.8 641.0 L1051.8 642.2 L1049.1 642.5 L1046.7 641.8 L1045.5 640.3 L1046.0 638.8 L1048.0 637.6 L1050.7 637.3 L1053.1 638.0ZM1175.6 632.9 L1175.2 634.5 L1173.3 635.6 L1170.6 635.9 L1168.2 635.2 L1166.9 633.8 L1167.4 632.2 L1169.3 631.1 L1171.9 630.8 L1174.3 631.5ZM1175.7 645.4 L1175.3 647.0 L1173.4 648.2 L1170.7 648.5 L1168.3 647.7 L1167.0 646.3 L1167.5 644.7 L1169.4 643.6 L1172.1 643.3 L1174.5 644.0ZM1163.4 659.5 L1163.0 661.1 L1161.0 662.3 L1158.3 662.6 L1155.9 661.9 L1154.7 660.4 L1155.1 658.8 L1157.0 657.6 L1159.7 657.4 L1162.1 658.1ZM1176.1 674.6 L1175.6 676.3 L1173.7 677.4 L1171.0 677.7 L1168.5 677.0 L1167.3 675.5 L1167.7 673.9 L1169.6 672.7 L1172.3 672.5 L1174.8 673.2ZM1177.1 764.3 L1176.6 766.1 L1174.6 767.3 L1171.8 767.6 L1169.3 766.9 L1168.0 765.3 L1168.4 763.6 L1170.4 762.3 L1173.2 762.0 L1175.8 762.8ZM1073.0 717.6 L1072.5 719.2 L1070.5 720.5 L1067.8 720.7 L1065.3 720.0 L1064.1 718.5 L1064.6 716.8 L1066.6 715.6 L1069.3 715.3 L1071.8 716.1ZM1119.7 747.8 L1119.2 749.6 L1117.2 750.8 L1114.4 751.1 L1111.9 750.3 L1110.6 748.8 L1111.1 747.1 L1113.1 745.9 L1115.9 745.6 L1118.4 746.3ZM957.1 732.3 L956.5 734.0 L954.4 735.2 L951.6 735.5 L949.2 734.7 L948.0 733.2 L948.6 731.5 L950.7 730.3 L953.4 730.0 L955.9 730.8ZM898.3 695.6 L897.7 697.3 L895.7 698.5 L892.9 698.8 L890.5 698.0 L889.4 696.6 L889.9 694.9 L892.0 693.7 L894.8 693.4 L897.2 694.2ZM990.7 781.0 L990.2 782.8 L988.1 784.0 L985.3 784.3 L982.8 783.6 L981.6 782.0 L982.1 780.2 L984.2 779.0 L987.0 778.7 L989.5 779.4ZM927.9 758.8 L927.4 760.5 L925.3 761.8 L922.4 762.1 L920.0 761.3 L918.8 759.8 L919.4 758.1 L921.5 756.8 L924.3 756.5 L926.8 757.3ZM882.5 774.6 L881.9 776.4 L879.8 777.6 L876.9 777.9 L874.5 777.2 L873.3 775.6 L873.9 773.9 L876.1 772.6 L878.9 772.3 L881.4 773.1ZM955.4 821.5 L954.9 823.3 L952.7 824.6 L949.8 824.9 L947.3 824.1 L946.1 822.5 L946.7 820.7 L948.8 819.4 L951.7 819.1 L954.2 819.9ZM1177.4 794.6 L1177.0 796.3 L1175.0 797.6 L1172.1 797.9 L1169.6 797.1 L1168.2 795.6 L1168.7 793.8 L1170.7 792.5 L1173.5 792.2 L1176.1 793.0ZM1097.9 844.4 L1097.4 846.2 L1095.3 847.5 L1092.4 847.8 L1089.9 847.0 L1088.6 845.4 L1089.1 843.6 L1091.1 842.2 L1094.0 841.9 L1096.6 842.7ZM1031.6 870.5 L1031.1 872.4 L1028.9 873.7 L1026.0 874.0 L1023.4 873.2 L1022.2 871.5 L1022.7 869.7 L1024.8 868.3 L1027.8 868.0 L1030.3 868.8ZM1189.6 973.5 L1189.3 974.7 L1188.0 975.6 L1186.2 975.8 L1184.6 975.3 L1183.7 974.2 L1184.0 973.0 L1185.3 972.2 L1187.1 971.9 L1188.7 972.5ZM1219.8 568.2 L1219.4 569.7 L1217.6 570.8 L1215.0 571.1 L1212.6 570.4 L1211.4 569.1 L1211.7 567.6 L1213.6 566.5 L1216.2 566.2 L1218.5 566.9ZM1218.8 542.9 L1218.4 544.3 L1216.6 545.4 L1214.0 545.7 L1211.7 545.0 L1210.5 543.7 L1210.8 542.2 L1212.7 541.2 L1215.2 540.9 L1217.6 541.6ZM1253.8 522.3 L1253.5 523.8 L1251.7 524.8 L1249.1 525.1 L1246.8 524.4 L1245.6 523.1 L1245.9 521.7 L1247.7 520.6 L1250.3 520.4 L1252.6 521.0ZM1289.3 501.5 L1289.0 502.9 L1287.2 503.9 L1284.7 504.2 L1282.3 503.6 L1281.1 502.3 L1281.4 500.9 L1283.2 499.8 L1285.7 499.6 L1288.1 500.2ZM1284.1 567.6 L1283.7 569.1 L1281.9 570.2 L1279.3 570.5 L1276.9 569.8 L1275.7 568.5 L1276.0 567.0 L1277.8 565.9 L1280.4 565.6 L1282.8 566.3ZM1304.8 567.5 L1304.5 569.0 L1302.7 570.0 L1300.1 570.3 L1297.7 569.6 L1296.4 568.3 L1296.7 566.8 L1298.5 565.7 L1301.1 565.5 L1303.5 566.1ZM1327.1 560.3 L1326.8 561.8 L1325.0 562.9 L1322.4 563.2 L1320.0 562.5 L1318.8 561.2 L1319.1 559.7 L1320.9 558.6 L1323.4 558.3 L1325.8 559.0ZM1352.2 567.0 L1351.9 568.5 L1350.1 569.6 L1347.6 569.9 L1345.2 569.2 L1343.9 567.9 L1344.2 566.4 L1345.9 565.3 L1348.5 565.0 L1350.9 565.7ZM1491.8 565.7 L1491.5 567.2 L1489.8 568.3 L1487.3 568.6 L1484.8 567.9 L1483.5 566.6 L1483.7 565.1 L1485.4 564.0 L1488.0 563.7 L1490.4 564.4ZM1412.8 511.5 L1412.6 512.9 L1410.9 514.0 L1408.3 514.2 L1406.0 513.6 L1404.7 512.3 L1404.9 510.8 L1406.6 509.8 L1409.2 509.6 L1411.5 510.2ZM1462.2 535.7 L1462.0 537.1 L1460.3 538.2 L1457.7 538.4 L1455.3 537.8 L1454.0 536.5 L1454.2 535.0 L1455.9 534.0 L1458.5 533.7 L1460.9 534.4ZM1426.9 452.9 L1426.6 454.3 L1424.9 455.3 L1422.5 455.5 L1420.2 454.9 L1418.9 453.7 L1419.1 452.3 L1420.8 451.3 L1423.3 451.1 L1425.6 451.7ZM1368.5 423.2 L1368.2 424.5 L1366.6 425.5 L1364.1 425.7 L1361.9 425.1 L1360.6 423.9 L1360.9 422.6 L1362.6 421.6 L1365.0 421.4 L1367.3 422.0ZM1500.5 470.4 L1500.3 471.8 L1498.6 472.8 L1496.2 473.0 L1493.8 472.4 L1492.5 471.1 L1492.7 469.8 L1494.4 468.7 L1496.8 468.5 L1499.2 469.1ZM1463.5 439.3 L1463.3 440.7 L1461.6 441.7 L1459.2 441.9 L1456.9 441.3 L1455.6 440.1 L1455.8 438.7 L1457.5 437.7 L1459.9 437.5 L1462.2 438.1ZM1482.6 418.1 L1482.4 419.4 L1480.8 420.4 L1478.3 420.6 L1476.0 420.0 L1474.8 418.8 L1475.0 417.5 L1476.6 416.5 L1479.0 416.3 L1481.3 416.9ZM1554.6 453.9 L1554.5 455.3 L1552.8 456.3 L1550.4 456.5 L1548.0 455.9 L1546.7 454.7 L1546.9 453.3 L1548.5 452.3 L1551.0 452.1 L1553.3 452.7ZM1536.7 565.3 L1536.5 566.8 L1534.8 567.9 L1532.3 568.2 L1529.8 567.5 L1528.4 566.2 L1528.6 564.7 L1530.3 563.6 L1532.9 563.3 L1535.3 564.0ZM1600.4 523.9 L1600.3 525.3 L1598.6 526.4 L1596.1 526.6 L1593.7 526.0 L1592.3 524.7 L1592.4 523.2 L1594.1 522.2 L1596.6 521.9 L1599.0 522.6ZM1629.6 491.2 L1629.4 492.6 L1627.8 493.7 L1625.3 493.9 L1622.9 493.3 L1621.5 492.0 L1621.7 490.6 L1623.3 489.6 L1625.8 489.3 L1628.2 490.0ZM1784.2 569.2 L1784.2 570.1 L1783.2 570.8 L1781.7 570.9 L1780.2 570.5 L1779.3 569.7 L1779.3 568.8 L1780.3 568.2 L1781.8 568.0 L1783.3 568.4ZM1129.9 569.1 L1129.5 570.6 L1127.6 571.7 L1125.0 571.9 L1122.7 571.3 L1121.5 569.9 L1121.9 568.4 L1123.8 567.3 L1126.4 567.1 L1128.7 567.7ZM1065.5 569.7 L1065.1 571.2 L1063.1 572.3 L1060.5 572.5 L1058.2 571.8 L1057.0 570.5 L1057.5 569.0 L1059.4 567.9 L1062.0 567.7 L1064.4 568.3ZM1044.7 569.8 L1044.3 571.4 L1042.3 572.4 L1039.7 572.7 L1037.4 572.0 L1036.2 570.7 L1036.7 569.2 L1038.6 568.1 L1041.2 567.8 L1043.6 568.5ZM1021.5 577.0 L1021.0 578.5 L1019.1 579.6 L1016.5 579.9 L1014.1 579.2 L1013.0 577.9 L1013.5 576.4 L1015.4 575.3 L1018.0 575.0 L1020.4 575.7ZM997.1 570.3 L996.6 571.8 L994.7 572.9 L992.0 573.1 L989.7 572.5 L988.6 571.1 L989.1 569.6 L991.0 568.5 L993.6 568.3 L996.0 568.9ZM856.6 571.6 L856.0 573.1 L854.0 574.2 L851.4 574.4 L849.1 573.8 L848.0 572.4 L848.6 570.9 L850.6 569.8 L853.3 569.6 L855.6 570.2ZM925.8 628.5 L925.2 630.1 L923.2 631.2 L920.5 631.5 L918.2 630.8 L917.1 629.4 L917.6 627.8 L919.6 626.7 L922.3 626.4 L924.7 627.1ZM879.6 602.6 L879.1 604.1 L877.1 605.2 L874.4 605.5 L872.1 604.8 L871.0 603.4 L871.6 601.9 L873.6 600.8 L876.2 600.5 L878.6 601.2ZM822.4 675.0 L821.8 676.7 L819.7 677.8 L816.9 678.1 L814.6 677.4 L813.5 676.0 L814.1 674.3 L816.2 673.2 L818.9 672.9 L821.3 673.6ZM854.4 712.2 L853.8 713.9 L851.7 715.1 L848.9 715.4 L846.5 714.7 L845.4 713.2 L846.0 711.5 L848.1 710.3 L850.9 710.0 L853.3 710.7ZM827.0 738.9 L826.3 740.6 L824.2 741.8 L821.4 742.1 L819.0 741.4 L817.9 739.9 L818.5 738.2 L820.6 736.9 L823.4 736.6 L825.9 737.4ZM758.0 694.6 L757.4 696.2 L755.2 697.4 L752.5 697.7 L750.1 697.0 L749.0 695.5 L749.7 693.8 L751.8 692.7 L754.6 692.4 L757.0 693.1ZM811.2 572.0 L810.6 573.5 L808.6 574.6 L805.9 574.9 L803.7 574.2 L802.6 572.8 L803.2 571.3 L805.3 570.3 L807.9 570.0 L810.2 570.7ZM733.2 615.1 L732.5 616.7 L730.4 617.8 L727.7 618.1 L725.4 617.4 L724.4 616.0 L725.1 614.4 L727.2 613.3 L729.9 613.0 L732.2 613.7ZM690.5 651.1 L689.8 652.7 L687.7 653.9 L684.9 654.2 L682.6 653.4 L681.6 652.0 L682.3 650.4 L684.4 649.3 L687.2 649.0 L689.5 649.7ZM559.9 568.4 L559.4 569.3 L558.2 570.0 L556.6 570.1 L555.2 569.7 L554.7 568.9 L555.1 568.0 L556.4 567.4 L558.0 567.2 L559.3 567.6ZM1174.6 543.1 L1174.2 544.6 L1172.3 545.7 L1169.8 545.9 L1167.4 545.3 L1166.2 543.9 L1166.6 542.5 L1168.5 541.4 L1171.0 541.2 L1173.4 541.8ZM1174.2 507.4 L1173.8 508.8 L1172.0 509.9 L1169.4 510.1 L1167.1 509.5 L1165.9 508.2 L1166.3 506.8 L1168.1 505.7 L1170.7 505.5 L1173.0 506.1ZM1174.0 496.1 L1173.7 497.5 L1171.9 498.5 L1169.3 498.8 L1167.0 498.1 L1165.8 496.9 L1166.2 495.4 L1168.0 494.4 L1170.6 494.2 L1172.9 494.8ZM1185.6 483.6 L1185.2 485.0 L1183.4 486.0 L1180.9 486.3 L1178.6 485.7 L1177.4 484.4 L1177.8 483.0 L1179.6 482.0 L1182.1 481.7 L1184.4 482.4ZM1173.8 470.5 L1173.4 471.9 L1171.6 472.9 L1169.1 473.1 L1166.8 472.5 L1165.6 471.3 L1166.0 469.9 L1167.8 468.9 L1170.3 468.6 L1172.6 469.3ZM1172.9 398.1 L1172.6 399.4 L1170.8 400.4 L1168.4 400.6 L1166.2 400.0 L1165.1 398.8 L1165.4 397.5 L1167.2 396.6 L1169.6 396.3 L1171.8 396.9ZM1266.4 434.8 L1266.1 436.2 L1264.3 437.2 L1261.9 437.4 L1259.6 436.8 L1258.4 435.6 L1258.7 434.2 L1260.5 433.3 L1262.9 433.0 L1265.2 433.6ZM1223.5 410.8 L1223.1 412.1 L1221.4 413.1 L1219.0 413.3 L1216.7 412.7 L1215.6 411.6 L1215.9 410.2 L1217.7 409.3 L1220.1 409.0 L1222.3 409.6ZM1333.4 385.8 L1333.1 387.1 L1331.5 388.0 L1329.1 388.2 L1326.8 387.7 L1325.6 386.5 L1325.9 385.2 L1327.6 384.3 L1330.0 384.0 L1332.2 384.6ZM1390.5 402.5 L1390.3 403.9 L1388.6 404.8 L1386.2 405.0 L1383.9 404.5 L1382.7 403.3 L1383.0 402.0 L1384.6 401.0 L1387.0 400.8 L1389.3 401.4ZM1427.5 390.6 L1427.3 391.9 L1425.7 392.9 L1423.3 393.1 L1421.0 392.5 L1419.8 391.4 L1420.0 390.1 L1421.6 389.1 L1424.0 388.9 L1426.3 389.5ZM1359.0 356.5 L1358.7 357.8 L1357.1 358.7 L1354.7 358.9 L1352.5 358.3 L1351.3 357.2 L1351.5 355.9 L1353.2 355.0 L1355.6 354.8 L1357.8 355.4ZM1172.7 375.6 L1172.3 376.9 L1170.6 377.8 L1168.2 378.0 L1166.0 377.5 L1164.9 376.3 L1165.2 375.0 L1167.0 374.1 L1169.4 373.9 L1171.6 374.4ZM1238.6 340.4 L1238.2 341.7 L1236.6 342.6 L1234.2 342.8 L1232.0 342.3 L1230.9 341.1 L1231.2 339.9 L1232.9 339.0 L1235.3 338.8 L1237.4 339.3ZM1291.5 322.9 L1291.2 324.1 L1289.5 325.0 L1287.2 325.3 L1285.0 324.7 L1283.9 323.6 L1284.2 322.4 L1285.8 321.5 L1288.2 321.3 L1290.3 321.8ZM1160.6 258.6 L1160.4 259.3 L1159.4 259.8 L1158.0 259.9 L1156.8 259.6 L1156.1 259.0 L1156.4 258.3 L1157.3 257.8 L1158.7 257.7 L1160.0 258.0ZM1220.2 594.1 L1219.9 595.6 L1218.0 596.7 L1215.4 597.0 L1213.0 596.3 L1211.7 595.0 L1212.1 593.4 L1214.0 592.3 L1216.6 592.1 L1219.0 592.7ZM1257.7 615.1 L1257.3 616.7 L1255.5 617.8 L1252.8 618.1 L1250.4 617.4 L1249.1 616.0 L1249.5 614.4 L1251.4 613.3 L1254.0 613.1 L1256.4 613.7ZM1296.8 637.1 L1296.5 638.7 L1294.7 639.8 L1292.0 640.1 L1289.5 639.4 L1288.2 638.0 L1288.6 636.4 L1290.4 635.3 L1293.1 635.0 L1295.5 635.7ZM1188.4 659.3 L1188.0 660.9 L1186.1 662.0 L1183.4 662.3 L1180.9 661.6 L1179.7 660.2 L1180.1 658.6 L1182.0 657.4 L1184.7 657.1 L1187.1 657.8ZM1279.9 715.4 L1279.5 717.1 L1277.6 718.3 L1274.9 718.6 L1272.4 717.9 L1271.0 716.4 L1271.4 714.7 L1273.3 713.5 L1276.0 713.2 L1278.5 714.0ZM1234.0 746.6 L1233.6 748.4 L1231.7 749.6 L1228.9 749.9 L1226.4 749.1 L1225.1 747.6 L1225.5 745.9 L1227.4 744.7 L1230.2 744.4 L1232.7 745.1ZM1395.6 727.8 L1395.3 729.4 L1393.5 730.7 L1390.7 731.0 L1388.2 730.2 L1386.8 728.7 L1387.1 727.0 L1388.9 725.8 L1391.7 725.5 L1394.2 726.2ZM1453.2 690.1 L1452.9 691.7 L1451.1 692.9 L1448.4 693.2 L1445.9 692.5 L1444.5 691.0 L1444.7 689.3 L1446.5 688.2 L1449.2 687.9 L1451.8 688.6ZM1363.2 777.0 L1362.9 778.8 L1361.0 780.1 L1358.2 780.4 L1355.6 779.6 L1354.2 778.0 L1354.5 776.3 L1356.5 775.0 L1359.2 774.7 L1361.8 775.5ZM1425.2 753.6 L1424.9 755.3 L1423.0 756.6 L1420.2 756.9 L1417.7 756.1 L1416.2 754.6 L1416.5 752.9 L1418.4 751.6 L1421.1 751.3 L1423.7 752.1ZM1470.6 768.4 L1470.4 770.1 L1468.5 771.4 L1465.7 771.7 L1463.1 770.9 L1461.7 769.4 L1461.9 767.6 L1463.8 766.4 L1466.5 766.1 L1469.1 766.8ZM1399.2 816.7 L1399.0 818.5 L1397.0 819.8 L1394.2 820.1 L1391.6 819.3 L1390.1 817.7 L1390.4 815.9 L1392.3 814.6 L1395.2 814.3 L1397.8 815.1ZM1257.9 842.6 L1257.5 844.4 L1255.5 845.7 L1252.6 846.1 L1250.0 845.3 L1248.6 843.6 L1249.0 841.8 L1251.0 840.5 L1253.9 840.2 L1256.5 841.0ZM1324.6 867.2 L1324.2 869.1 L1322.2 870.4 L1319.3 870.7 L1316.7 869.9 L1315.2 868.3 L1315.6 866.4 L1317.6 865.0 L1320.5 864.7 L1323.1 865.5ZM1165.4 973.8 L1165.1 975.0 L1163.8 975.9 L1162.0 976.1 L1160.4 975.6 L1159.5 974.5 L1159.8 973.3 L1161.1 972.4 L1162.9 972.2 L1164.5 972.8ZM1328.1 574.2 L1327.8 575.7 L1326.0 576.8 L1323.4 577.0 L1321.0 576.4 L1319.7 575.0 L1320.0 573.5 L1321.8 572.4 L1324.4 572.2 L1326.8 572.8ZM1424.4 623.7 L1424.1 625.3 L1422.3 626.4 L1419.7 626.7 L1417.2 626.0 L1415.9 624.6 L1416.1 623.0 L1417.9 621.9 L1420.6 621.6 L1423.0 622.3ZM1469.6 597.0 L1469.4 598.5 L1467.6 599.6 L1465.0 599.9 L1462.6 599.2 L1461.2 597.9 L1461.4 596.3 L1463.2 595.2 L1465.8 594.9 L1468.2 595.6ZM1528.0 668.0 L1527.8 669.7 L1526.0 670.8 L1523.3 671.1 L1520.8 670.4 L1519.4 669.0 L1519.6 667.3 L1521.3 666.2 L1524.0 665.9 L1526.5 666.6ZM1497.1 705.7 L1496.9 707.4 L1495.1 708.6 L1492.4 708.9 L1489.8 708.1 L1488.4 706.6 L1488.6 705.0 L1490.4 703.8 L1493.1 703.5 L1495.7 704.2ZM1524.9 731.7 L1524.6 733.4 L1522.8 734.6 L1520.1 734.9 L1517.5 734.1 L1516.0 732.6 L1516.3 730.9 L1518.1 729.7 L1520.8 729.4 L1523.4 730.2ZM1592.1 686.2 L1591.9 687.8 L1590.2 689.0 L1587.5 689.3 L1584.9 688.6 L1583.4 687.1 L1583.6 685.5 L1585.4 684.3 L1588.0 684.0 L1590.6 684.7ZM1614.9 606.7 L1614.7 608.3 L1613.0 609.4 L1610.4 609.7 L1607.9 609.0 L1606.5 607.6 L1606.6 606.1 L1608.3 605.0 L1610.9 604.7 L1613.4 605.4ZM1657.8 641.7 L1657.7 643.3 L1656.0 644.4 L1653.4 644.7 L1650.9 644.0 L1649.4 642.6 L1649.5 641.0 L1651.2 639.9 L1653.8 639.6 L1656.4 640.3ZM1781.3 557.2 L1781.3 558.1 L1780.3 558.8 L1778.8 558.9 L1777.3 558.5 L1776.4 557.7 L1776.4 556.8 L1777.4 556.2 L1778.9 556.0 L1780.4 556.4ZM1130.3 543.7 L1129.9 545.1 L1128.1 546.2 L1125.5 546.5 L1123.1 545.8 L1122.0 544.5 L1122.4 543.0 L1124.2 542.0 L1126.8 541.7 L1129.2 542.4ZM1094.8 523.7 L1094.4 525.2 L1092.5 526.2 L1089.9 526.5 L1087.6 525.8 L1086.5 524.5 L1086.9 523.1 L1088.8 522.0 L1091.3 521.8 L1093.6 522.4ZM1058.8 503.5 L1058.3 504.9 L1056.5 506.0 L1053.9 506.2 L1051.6 505.6 L1050.5 504.3 L1051.0 502.9 L1052.8 501.8 L1055.4 501.6 L1057.6 502.2ZM1022.1 563.1 L1021.7 564.6 L1019.7 565.7 L1017.1 566.0 L1014.8 565.3 L1013.7 564.0 L1014.2 562.5 L1016.1 561.4 L1018.7 561.1 L1021.0 561.8ZM934.9 515.7 L934.4 517.1 L932.5 518.2 L929.9 518.4 L927.6 517.8 L926.5 516.5 L927.1 515.1 L929.0 514.0 L931.6 513.8 L933.8 514.4ZM885.7 540.8 L885.2 542.3 L883.2 543.4 L880.6 543.6 L878.3 543.0 L877.3 541.7 L877.8 540.2 L879.8 539.1 L882.4 538.9 L884.7 539.5ZM919.4 457.2 L918.9 458.6 L917.0 459.6 L914.5 459.8 L912.3 459.2 L911.3 458.0 L911.8 456.6 L913.7 455.6 L916.2 455.4 L918.4 456.0ZM977.5 426.4 L977.0 427.7 L975.1 428.7 L972.7 428.9 L970.5 428.3 L969.4 427.1 L969.9 425.8 L971.7 424.8 L974.2 424.6 L976.4 425.2ZM845.6 476.0 L845.1 477.4 L843.1 478.4 L840.6 478.6 L838.4 478.0 L837.4 476.8 L837.9 475.4 L839.9 474.3 L842.4 474.1 L844.6 474.7ZM882.2 444.2 L881.7 445.5 L879.8 446.5 L877.3 446.8 L875.1 446.2 L874.1 444.9 L874.6 443.6 L876.5 442.6 L879.0 442.4 L881.2 443.0ZM862.5 423.2 L862.0 424.5 L860.1 425.5 L857.6 425.7 L855.4 425.1 L854.4 423.9 L855.0 422.6 L856.9 421.6 L859.3 421.4 L861.5 422.0ZM790.6 460.4 L790.0 461.8 L788.1 462.8 L785.6 463.0 L783.4 462.4 L782.4 461.2 L783.0 459.8 L784.9 458.8 L787.5 458.5 L789.6 459.2ZM745.9 531.5 L745.3 533.0 L743.3 534.0 L740.7 534.3 L738.4 533.6 L737.4 532.3 L738.1 530.9 L740.1 529.8 L742.7 529.6 L744.9 530.2ZM715.7 499.2 L715.1 500.6 L713.1 501.7 L710.5 501.9 L708.3 501.3 L707.3 500.0 L708.0 498.6 L710.0 497.5 L712.5 497.3 L714.7 497.9ZM557.2 580.6 L556.8 581.5 L555.5 582.1 L553.9 582.3 L552.5 581.9 L552.0 581.1 L552.4 580.2 L553.7 579.5 L555.3 579.3 L556.7 579.8ZM1162.2 483.8 L1161.8 485.2 L1160.0 486.2 L1157.5 486.5 L1155.2 485.9 L1154.0 484.6 L1154.4 483.2 L1156.2 482.2 L1158.8 481.9 L1161.0 482.6ZM1080.2 436.4 L1079.8 437.7 L1078.0 438.7 L1075.5 439.0 L1073.3 438.4 L1072.2 437.1 L1072.6 435.8 L1074.4 434.8 L1076.9 434.6 L1079.1 435.2ZM1122.7 411.6 L1122.3 413.0 L1120.5 413.9 L1118.0 414.2 L1115.8 413.6 L1114.7 412.4 L1115.1 411.1 L1116.9 410.1 L1119.3 409.9 L1121.6 410.5ZM1011.9 388.3 L1011.4 389.6 L1009.6 390.6 L1007.2 390.8 L1005.0 390.2 L1004.0 389.1 L1004.4 387.8 L1006.2 386.8 L1008.7 386.6 L1010.8 387.2ZM954.9 406.1 L954.4 407.4 L952.5 408.4 L950.1 408.6 L947.9 408.0 L946.9 406.8 L947.4 405.5 L949.2 404.5 L951.7 404.3 L953.8 404.9ZM917.4 394.7 L916.9 396.1 L915.0 397.0 L912.6 397.2 L910.4 396.6 L909.4 395.5 L909.9 394.2 L911.7 393.2 L914.2 393.0 L916.3 393.6ZM985.6 359.4 L985.1 360.7 L983.3 361.6 L980.9 361.8 L978.8 361.3 L977.7 360.1 L978.2 358.9 L980.0 357.9 L982.4 357.7 L984.5 358.3ZM1106.0 341.5 L1105.6 342.7 L1103.9 343.6 L1101.5 343.8 L1099.3 343.3 L1098.3 342.2 L1098.7 340.9 L1100.4 340.0 L1102.8 339.8 L1104.9 340.3ZM1052.5 324.7 L1052.1 326.0 L1050.4 326.9 L1048.0 327.1 L1045.9 326.5 L1044.8 325.4 L1045.3 324.2 L1047.0 323.3 L1049.4 323.1 L1051.5 323.6ZM1179.2 258.5 L1179.0 259.2 L1178.0 259.7 L1176.6 259.8 L1175.3 259.5 L1174.7 258.9 L1174.9 258.2 L1175.9 257.7 L1177.3 257.5 L1178.5 257.9Z" fill="#464a48" fill-rule="nonzero"/></g><clipPath id="sclip" clip-path="url(#mclip)"><use href="#struts"/></clipPath><g clip-path="url(#sclip)"><g clip-path="url(#mclip)"><path d="M1205.3 999.9L525.0 560.0M1144.3 1000.7L1810.4 548.2M1235.3 979.3L554.7 544.8M1113.9 980.8L1780.9 533.7M1264.8 959.0L584.1 529.8M1083.9 961.1L1751.8 519.4M1293.9 938.9L613.1 515.0M1054.3 941.8L1722.9 505.2M1322.6 919.2L641.8 500.4M1025.1 922.6L1694.4 491.2M1351.0 899.6L670.1 485.9M996.3 903.7L1666.1 477.3M1379.0 880.4L698.2 471.6M967.8 885.0L1638.2 463.5M1406.6 861.3L725.9 457.4M939.6 866.6L1610.5 449.9M1433.9 842.6L753.3 443.4M911.8 848.4L1583.2 436.5M1460.8 824.0L780.4 429.6M884.3 830.4L1556.1 423.2M1487.4 805.7L807.2 415.9M857.2 812.6L1529.3 410.0M1513.7 787.7L833.7 402.4M830.3 795.0L1502.8 397.0M1539.6 769.8L860.0 389.0M803.8 777.6L1476.5 384.0M1565.2 752.2L885.9 375.7M777.7 760.5L1450.6 371.3M1590.4 734.8L911.6 362.6M751.8 743.5L1424.8 358.6M1615.4 717.7L936.9 349.7M726.2 726.8L1399.4 346.1M1640.0 700.7L962.0 336.8M700.9 710.2L1374.2 333.7M1664.4 683.9L986.9 324.2M675.9 693.8L1349.2 321.4M1688.5 667.4L1011.5 311.6M651.2 677.6L1324.5 309.3M1712.2 651.0L1035.8 299.2M626.8 661.6L1300.0 297.2M1735.7 634.8L1059.9 286.9M602.6 645.8L1275.8 285.3M1758.9 618.9L1083.7 274.7M578.8 630.2L1251.8 273.5M1781.8 603.1L1107.2 262.7M555.2 614.7L1228.1 261.8M1804.5 587.5L1130.6 250.8M531.8 599.4L1204.6 250.3M1826.9 572.1L1153.7 239.0M508.7 584.3L1181.3 238.8" stroke="#b4b8b7" stroke-width="1.15" fill="none" opacity="0.55"/></g></g><path d="M1175.0 1020.8L1098.3 970.5" stroke="#1ccc1c" stroke-width="5.4"/><polygon points="1084.5,961.5 1101.2,967.0 1096.2,974.7" fill="#17b51a" /><path d="M1175.0 1020.8L1250.7 968.7" stroke="#c81212" stroke-width="5.4"/><polygon points="1264.2,959.4 1252.9,972.8 1247.6,965.2" fill="#b00f10" /><path d="M1174.8 1021.3L1174.4 940" stroke="#0909b4" stroke-width="5.8"/><polygon points="1174.3,920.5 1167.8,941.0 1180.8,941.0" fill="#0909b4" /></svg></div><div class="abs" style="left:0;top:0;width:1920px;height:1080px;overflow:hidden"><div class="abs" style="left:504px;top:93px;width:88px;height:95px;background:#dedede"></div><div class="abs" style="left:509px;top:98px;width:77px;height:77px;background:#d2d2d2;border:2px solid #4a90e2;border-radius:3px"></div><svg width="1920" height="1080" style="left:0;top:0"><polygon points="519.500,136 546.800,117 574,136 546.800,155" fill="#2a2a2a"/><g fill="#8a8a8a"><circle cx="546.800" cy="136" r="1.2"/><circle cx="538" cy="136" r="0.8"/><circle cx="555" cy="136" r="0.8"/><circle cx="546.800" cy="129" r="0.8"/><circle cx="546.800" cy="143" r="0.8"/><circle cx="533" cy="131" r="0.7"/><circle cx="560" cy="141" r="0.7"/><circle cx="560" cy="131" r="0.7"/><circle cx="533" cy="141" r="0.7"/></g></svg><div class="t" style="left:519px;top:107px;font-size:22px;color:#f2f2f2">1</div><div class="abs" style="left:1311px;top:93px;width:524px;height:26px;background:#2e2e2e"></div><div class="t" style="left:1319px;top:100px;font-size:17.200px;font-weight:bold;color:#fff">Slicing Result</div><svg width="1920" height="1080" style="left:0;top:0"><path d="M1812 103 l7.500 5 l7.500 -5 M1812 109 l7.500 5 l7.500 -5" fill="none" stroke="#fff" stroke-width="1.6" stroke-linecap="round" stroke-linejoin="round"/></svg><svg width="1920" height="1080" style="left:0;top:0"><polygon points="592,897 656,932 656,1003 593,1041 529,1003 529,932" fill="#c7c7c7"/><polygon points="592,897 656,932 593,968 529,932" fill="#c9c9c9"/><polygon points="593,968 656,932 656,1003 593,1041" fill="#c5c5c5"/><polygon points="593,968 529,932 529,1003 593,1041" fill="#c7c7c7"/><path d="M593.500 1040 V972" stroke="#8f90d8" stroke-width="1.4"/><polygon points="593.500,964 590,973 597,973" fill="#8f90d8"/><path d="M593.500 1041 L535 1009" stroke="#7cc481" stroke-width="1.4"/><polygon points="527,1004.500 537,1006.500 533.500,1012.500" fill="#7cc481"/><path d="M593.500 1041 L652 1008" stroke="#d98a86" stroke-width="1.4"/><polygon points="659,1003.500 649,1005.500 652.500,1011.500" fill="#d98a86"/><text transform="matrix(0.87 -0.5 0.87 0.5 578 942)" font-size="13.5" fill="#4a4a4a">Top</text><text transform="matrix(0.87 0.5 0 1 549 984)" font-size="15" fill="#4a4a4a">Left</text><text transform="matrix(0.87 -0.5 0 1 609 1000)" font-size="15" fill="#4a4a4a">Front</text><text x="587" y="953" font-size="15" fill="#8f90d8">z</text><text x="505" y="1001" font-size="16" fill="#7cc481">y</text><text x="668" y="1000" font-size="16" fill="#d98a86">x</text><circle cx="713" cy="1008" r="24" fill="#f7f7f7"/><g fill="none" stroke="#6a6a6a" stroke-width="2" stroke-linecap="round" stroke-linejoin="round"><path d="M701 1002 v-4 a3 3 0 0 1 3 -3 h4 M718 995 h4 a3 3 0 0 1 3 3 v4 M725 1014 v4 a3 3 0 0 1 -3 3 h-4 M708 1021 h-4 a3 3 0 0 1 -3 -3 v-4"/><path d="M713 1000.500 l6.500 3.500 v7.500 l-6.500 3.500 l-6.500 -3.500 v-7.500 z M706.500 1004 l6.500 3.500 l6.500 -3.500 M713 1007.500 v7.500" stroke-width="1.6"/></g><rect x="791" y="1026" width="772" height="16" rx="8" fill="#fff"/><rect x="796" y="1030" width="760" height="8" rx="4" fill="#00ae42"/><circle cx="1556" cy="1034" r="7.500" fill="#00ae42" stroke="#fff" stroke-width="1"/><rect x="1568" y="1021" width="59" height="26" rx="3" fill="#fff"/><rect x="1889" y="226.500" width="16.500" height="352" rx="8.200" fill="#fff"/><rect x="1893" y="231" width="8.200" height="345" rx="4" fill="#cfcfcf"/><rect x="1889" y="570" width="16.500" height="353" rx="8.200" fill="#fff"/><rect x="1893" y="574" width="8.600" height="342" fill="#00ae42"/><circle cx="1897" cy="915" r="7.500" fill="#00ae42" stroke="#fff" stroke-width="1"/><path d="M1896 1028.500 l5.500 2.800 l-5.500 2.800 l-5.500 -2.800 z" fill="#00ae42"/><path d="M1890.500 1034.300 l5.500 2.800 l5.500 -2.800 M1890.500 1037.300 l5.500 2.800 l5.500 -2.800" fill="none" stroke="#00ae42" stroke-width="1.6"/><rect x="1836" y="915" width="48" height="46" rx="3" fill="#fff"/><rect x="1836" y="536" width="48" height="36" rx="3" fill="#fff"/><ellipse cx="1827" cy="541" rx="10" ry="4.500" transform="rotate(22 1827 541)" fill="none" stroke="#00ae42" stroke-width="4.200"/><circle cx="1897" cy="571" r="6.500" fill="#00ae42"/><path d="M1893.500 571 h7 M1897 567.500 v7" stroke="#fff" stroke-width="1.200"/></svg><div class="t" style="left:1574px;top:1025px;font-size:18px;color:#00ae42">12837</div><div class="t" style="left:1857px;top:919px;font-size:17.500px;color:#00ae42">1</div><div class="t" style="left:1843px;top:940px;font-size:17.500px;color:#00ae42">0.20</div><div class="t" style="left:1843px;top:551px;font-size:17.500px;color:#00ae42">0.40</div><div class="abs" style="left:1706px;top:576px;width:214px;height:89px;background:#fff"></div><div class="abs" style="left:1710px;top:580px;width:205px;height:26px;background:#00ae42"></div><div class="t" style="left:1713px;top:584px;font-size:17.500px;color:#fff">Add Pause</div><div class="t" style="left:1713px;top:640px;font-size:18.300px;color:#333">Jump to Layer</div><div class="abs" style="left:1468px;top:608px;width:450px;height:25px;background:rgba(50,50,50,0.92);border-radius:2px"></div><div class="t" id="tip" style="left:1472px;top:610.500px;font-size:18.350px;color:#fff">Insert a pause command at the beginning of this layer.</div><div class="t" id="ann1" style="left:1581px;top:366px;font-size:44px;font-family:'Liberation Serif',serif;color:#111;letter-spacing:-0.4px">Adding a pause to</div><div class="t" id="ann2" style="left:1630px;top:414.500px;font-size:44px;font-family:'Liberation Serif',serif;color:#111;letter-spacing:0px">insert fabric</div><svg width="1920" height="1080" style="left:0;top:0"><g fill="none" stroke="#fff" stroke-linecap="round" stroke-linejoin="round"><path d="M1840 486 C1772 472 1680 470 1619 481 C1540 496 1470 542 1431 590 C1407 621 1422 655 1461 676 C1521 707 1640 721 1746 713 C1830 706 1900 689 1960 654" stroke-width="20"/><path d="M1975 582 C1935 552 1850 514 1718 510 C1650 510 1600 521 1563 537" stroke-width="22"/><path d="M1572 533 C1548 543 1522 556 1497 573" stroke-width="11"/></g></svg></div><div id="taskbar" class="abs"><div class="t" style="left:-9px;top:11px;font-size:15px;color:#fff">5°C</div><div class="abs" style="left:442px;top:19px;width:15px;height:8px;background:#4cc2f0"></div><div class="abs" style="left:459px;top:19px;width:15px;height:8px;background:#4cc2f0"></div><div class="abs" style="left:495px;top:12px;width:300px;height:30px;border-radius:15px;background:#3a3a3a;border:1px solid #444"></div><div class="abs" style="left:822px;top:18px;width:28px;height:10px;background:#f2f2f2;border-radius:2px"></div><div class="abs" style="left:882px;top:17px;width:18px;height:10px;background:#1a73d9;border-radius:5px 5px 0 0"></div><div class="abs" style="left:938px;top:19px;width:14px;height:10px;background:#f0b429;border-radius:2px"></div><div class="abs" style="left:1000px;top:15px;width:30px;height:30px;border-radius:15px;background:#27b5d6"></div><div class="abs" style="left:1062px;top:17px;width:30px;height:10px;background:#2b7fd3;border-radius:3px"></div><div class="abs" style="left:1122px;top:16px;width:32px;height:10px;background:linear-gradient(90deg,#d93025 0 30%,#1f1f1f 30% 70%,#d93025 70%)"></div><div class="abs" style="left:1185px;top:16px;width:26px;height:26px;border-radius:13px;background:#e8345a"></div><div class="abs" style="left:1256px;top:17px;width:22px;height:12px;background:#1d84e0;transform:skewX(-20deg)"></div><div class="abs" style="left:1304px;top:15px;width:26px;height:12px;background:#f4f4f4;border-radius:3px 3px 0 0"></div><div class="abs" style="left:1309px;top:19px;width:16px;height:3px;background:#d63b2f"></div><div class="abs" style="left:1355px;top:12px;width:55px;height:14px;background:#2e2e2e;border-radius:5px 5px 0 0;border:1px solid #3a3a3a"></div><div class="abs" style="left:1365px;top:17px;width:34px;height:10px;background:#00ae42;border-radius:6px 6px 0 0"></div><div class="t" style="left:1647px;top:14px;font-size:15px;color:#fff">ENG</div><div class="t" style="left:1834px;top:12px;font-size:15px;color:#fff">3:38 PM</div></div></body></html>
